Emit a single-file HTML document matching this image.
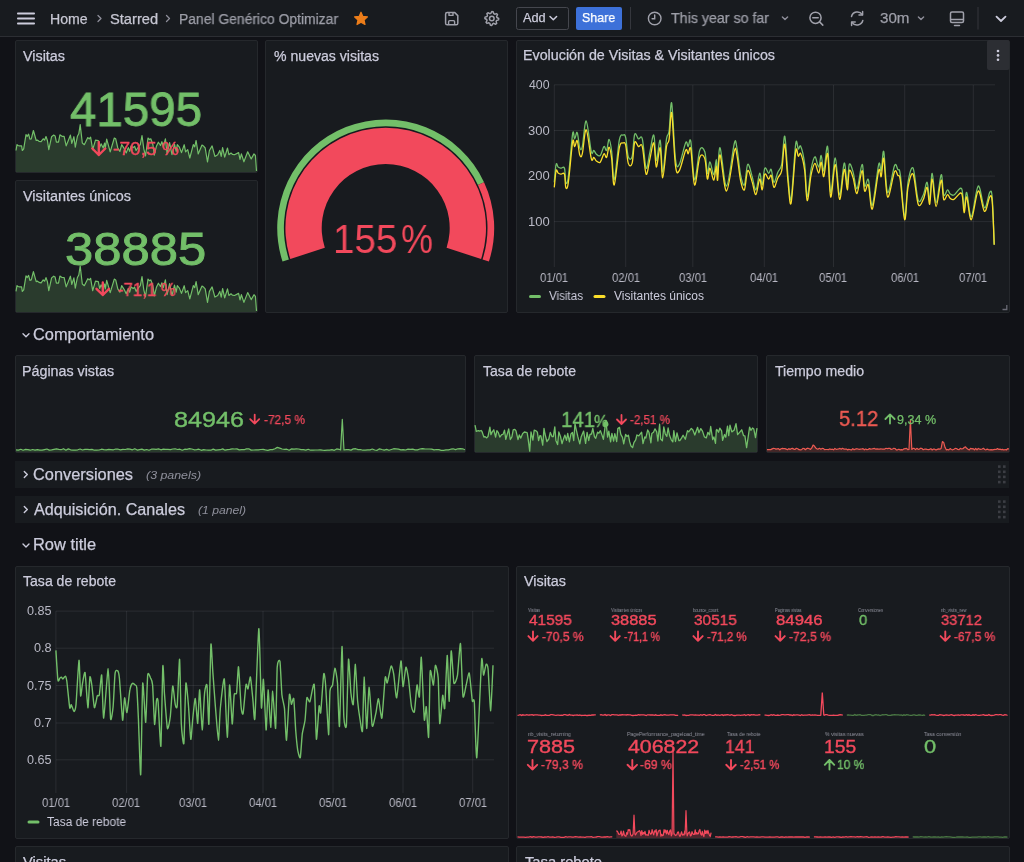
<!DOCTYPE html>
<html><head><meta charset="utf-8"><title>Panel Genérico Optimizar - Grafana</title>
<style>
html,body{margin:0;padding:0}
body{width:1024px;height:862px;overflow:hidden;background:#111217;position:relative;font-family:"Liberation Sans",sans-serif}
.p{position:absolute;box-sizing:border-box;background:#181b1f;border:1px solid #25282c;border-radius:2px}
.t{position:absolute;white-space:nowrap;line-height:1;transform-origin:0 0;will-change:transform}
svg{overflow:visible}
</style></head><body>
<div style="position:absolute;left:0;top:0;width:1024px;height:36px;background:#181b1f;border-bottom:1px solid #2c2e33"></div>
<svg style="position:absolute;left:0;top:0" width="1024" height="36"><rect x="17" y="12.6" width="18" height="1.8" rx="0.9" fill="#ccccdc"/><rect x="17" y="17.6" width="18" height="1.8" rx="0.9" fill="#ccccdc"/><rect x="17" y="22.6" width="18" height="1.8" rx="0.9" fill="#ccccdc"/><path d="M98.0 15.5 L101.0 18.5 L98.0 21.5" stroke="#8e8e9a" stroke-width="1.3" fill="none" stroke-linecap="round" stroke-linejoin="round"/><path d="M166.5 15.5 L169.5 18.5 L166.5 21.5" stroke="#8e8e9a" stroke-width="1.3" fill="none" stroke-linecap="round" stroke-linejoin="round"/><path d="M361.00 12.20 L362.88 16.41 L367.47 16.90 L364.04 19.99 L365.00 24.50 L361.00 22.20 L357.00 24.50 L357.96 19.99 L354.53 16.90 L359.12 16.41Z" fill="#ec7d1a" stroke="#ec7d1a" stroke-width="1.2" stroke-linejoin="round"/><path d="M447.2 12.6 h7.6 l3 3 v7.6 a1.6 1.6 0 0 1 -1.6 1.6 h-9 a1.6 1.6 0 0 1 -1.6 -1.6 v-9 a1.6 1.6 0 0 1 1.6 -1.6z" stroke="#a0a1ab" stroke-width="1.5" fill="none" stroke-linejoin="round"/><path d="M449 12.8 v2.6 h4 v-2.6 M448.6 24.6 v-2.8 a1.2 1.2 0 0 1 1.2 -1.2 h3.6 a1.2 1.2 0 0 1 1.2 1.2 v2.8" stroke="#a0a1ab" stroke-width="1.4" fill="none" stroke-linejoin="round"/><path d="M490.79 13.40 L491.80 11.60 L493.15 11.73 L493.79 13.70 L494.69 14.18 L496.68 13.62 L497.54 14.67 L496.60 16.51 L496.90 17.49 L498.70 18.50 L498.57 19.85 L496.60 20.49 L496.12 21.39 L496.68 23.38 L495.63 24.24 L493.79 23.30 L492.81 23.60 L491.80 25.40 L490.45 25.27 L489.81 23.30 L488.91 22.82 L486.92 23.38 L486.06 22.33 L487.00 20.49 L486.70 19.51 L484.90 18.50 L485.03 17.15 L487.00 16.51 L487.48 15.61 L486.92 13.62 L487.97 12.76 L489.81 13.70Z" stroke="#a0a1ab" stroke-width="1.5" fill="none" stroke-linejoin="round"/><circle cx="491.8" cy="18.5" r="2.3" stroke="#a0a1ab" stroke-width="1.5" fill="none"/><rect x="516.5" y="7.5" width="52" height="22" rx="2" fill="none" stroke="#45474e" stroke-width="1"/><path d="M550 16.5 L553.3 19.8 L556.6 16.5" stroke="#ccccdc" stroke-width="1.5" fill="none" stroke-linecap="round" stroke-linejoin="round"/><rect x="576" y="7" width="46" height="23" rx="2" fill="#3d71d9"/><rect x="630" y="7" width="1" height="22.5" fill="#35373d"/><circle cx="654.7" cy="18.5" r="6.3" stroke="#a0a1ab" stroke-width="1.4" fill="none"/><path d="M654.7 15 v3.8 h-2.6" stroke="#a0a1ab" stroke-width="1.4" fill="none" stroke-linecap="round"/><path d="M782.4 17 L785.0 19.6 L787.6 17" stroke="#8e8e9a" stroke-width="1.4" fill="none" stroke-linecap="round" stroke-linejoin="round"/><path d="M918.4 17 L921.0 19.6 L923.6 17" stroke="#8e8e9a" stroke-width="1.4" fill="none" stroke-linecap="round" stroke-linejoin="round"/><circle cx="815.5" cy="17.8" r="5.6" stroke="#a0a1ab" stroke-width="1.5" fill="none"/><path d="M812.8 17.8 h5.4 M819.6 21.9 l3.2 3.2" stroke="#a0a1ab" stroke-width="1.5" fill="none" stroke-linecap="round"/><path d="M851.5 16.5 a6 6 0 0 1 10.8 -1.8 M862.8 20.5 a6 6 0 0 1 -10.8 1.8" stroke="#a0a1ab" stroke-width="1.5" fill="none" stroke-linecap="round"/><path d="M862.6 11.5 v3.6 h-3.6 M851.6 25.5 v-3.6 h3.6" stroke="#a0a1ab" stroke-width="1.5" fill="none" stroke-linecap="round" stroke-linejoin="round"/><rect x="950.5" y="12" width="13" height="10.5" rx="1.5" stroke="#a0a1ab" stroke-width="1.5" fill="none"/><path d="M951 19.5 h12 M954.5 25.5 h5" stroke="#a0a1ab" stroke-width="1.5" fill="none" stroke-linecap="round"/><rect x="977.5" y="7" width="1" height="22.5" fill="#35373d"/><path d="M996.5 16.6 L1001 21 L1005.5 16.6" stroke="#ccccdc" stroke-width="1.8" fill="none" stroke-linecap="round" stroke-linejoin="round"/></svg>
<div class="p" style="left:15px;top:40px;width:243px;height:133px;"></div>
<div class="p" style="left:15px;top:180px;width:243px;height:133px;"></div>
<div class="p" style="left:265px;top:40px;width:243px;height:273px;"></div>
<div class="p" style="left:516px;top:40px;width:494px;height:273px;"></div>
<svg style="position:absolute;left:0;top:0" width="1024" height="320"><path d="M16.0 150.5 L17.0 144.7 L18.1 145.5 L19.5 145.9 L21.6 145.9 L22.3 150.5 L23.7 148.8 L26.0 134.6 L27.2 136.3 L28.6 134.2 L29.9 139.2 L31.3 138.8 L33.4 130.5 L36.2 140.5 L37.6 140.1 L39.0 141.3 L41.1 141.7 L43.2 138.8 L44.6 140.1 L46.0 136.5 L47.4 140.5 L48.8 149.7 L51.6 136.7 L53.7 135.1 L55.1 135.9 L56.4 142.2 L58.5 142.2 L59.9 134.8 L62.0 136.3 L64.1 136.3 L66.2 145.9 L68.3 140.5 L70.4 135.1 L71.8 143.4 L73.9 136.7 L75.3 147.2 L77.4 136.3 L78.8 133.8 L80.2 124.6 L82.3 143.0 L84.3 144.7 L87.8 137.6 L89.2 138.8 L90.6 137.1 L92.7 149.7 L95.5 140.1 L98.3 140.5 L99.7 147.6 L101.1 143.8 L103.2 148.0 L104.6 143.0 L105.3 148.0 L106.7 139.2 L110.2 151.8 L114.3 138.0 L115.7 138.8 L117.8 148.0 L119.9 151.4 L121.7 144.7 L124.1 148.4 L126.2 153.0 L128.3 147.6 L129.7 151.4 L131.1 145.9 L133.2 147.6 L134.6 146.3 L136.1 150.5 L138.2 147.2 L140.3 144.7 L142.0 135.5 L143.8 148.8 L145.5 156.0 L148.0 138.0 L149.4 139.6 L150.8 138.8 L152.9 144.7 L154.3 155.1 L156.4 146.3 L158.4 142.2 L160.5 145.5 L161.9 141.7 L163.3 146.8 L165.4 138.8 L167.1 153.9 L169.6 142.6 L172.0 154.7 L174.5 144.2 L176.2 151.4 L177.3 144.7 L179.4 147.2 L181.5 152.6 L184.2 144.7 L185.6 151.8 L187.7 149.7 L189.8 158.0 L193.3 144.7 L194.7 146.8 L196.1 140.5 L198.2 153.9 L202.0 145.1 L203.8 146.3 L205.2 148.0 L207.5 161.8 L209.4 150.5 L212.1 145.9 L214.9 156.4 L217.7 154.7 L219.8 150.5 L221.2 156.4 L222.6 147.6 L224.7 157.2 L227.5 148.0 L228.9 154.7 L231.0 153.0 L232.4 154.3 L234.5 154.7 L238.6 152.6 L240.0 159.3 L241.4 153.9 L243.9 161.8 L247.7 151.8 L251.2 158.9 L254.0 153.9 L255.4 155.5 L256.5 171.0 L256.5 172.0 L16.0 172.0 Z" fill="#73bf69" fill-opacity="0.20"/><path d="M16.0 150.5 L17.0 144.7 L18.1 145.5 L19.5 145.9 L21.6 145.9 L22.3 150.5 L23.7 148.8 L26.0 134.6 L27.2 136.3 L28.6 134.2 L29.9 139.2 L31.3 138.8 L33.4 130.5 L36.2 140.5 L37.6 140.1 L39.0 141.3 L41.1 141.7 L43.2 138.8 L44.6 140.1 L46.0 136.5 L47.4 140.5 L48.8 149.7 L51.6 136.7 L53.7 135.1 L55.1 135.9 L56.4 142.2 L58.5 142.2 L59.9 134.8 L62.0 136.3 L64.1 136.3 L66.2 145.9 L68.3 140.5 L70.4 135.1 L71.8 143.4 L73.9 136.7 L75.3 147.2 L77.4 136.3 L78.8 133.8 L80.2 124.6 L82.3 143.0 L84.3 144.7 L87.8 137.6 L89.2 138.8 L90.6 137.1 L92.7 149.7 L95.5 140.1 L98.3 140.5 L99.7 147.6 L101.1 143.8 L103.2 148.0 L104.6 143.0 L105.3 148.0 L106.7 139.2 L110.2 151.8 L114.3 138.0 L115.7 138.8 L117.8 148.0 L119.9 151.4 L121.7 144.7 L124.1 148.4 L126.2 153.0 L128.3 147.6 L129.7 151.4 L131.1 145.9 L133.2 147.6 L134.6 146.3 L136.1 150.5 L138.2 147.2 L140.3 144.7 L142.0 135.5 L143.8 148.8 L145.5 156.0 L148.0 138.0 L149.4 139.6 L150.8 138.8 L152.9 144.7 L154.3 155.1 L156.4 146.3 L158.4 142.2 L160.5 145.5 L161.9 141.7 L163.3 146.8 L165.4 138.8 L167.1 153.9 L169.6 142.6 L172.0 154.7 L174.5 144.2 L176.2 151.4 L177.3 144.7 L179.4 147.2 L181.5 152.6 L184.2 144.7 L185.6 151.8 L187.7 149.7 L189.8 158.0 L193.3 144.7 L194.7 146.8 L196.1 140.5 L198.2 153.9 L202.0 145.1 L203.8 146.3 L205.2 148.0 L207.5 161.8 L209.4 150.5 L212.1 145.9 L214.9 156.4 L217.7 154.7 L219.8 150.5 L221.2 156.4 L222.6 147.6 L224.7 157.2 L227.5 148.0 L228.9 154.7 L231.0 153.0 L232.4 154.3 L234.5 154.7 L238.6 152.6 L240.0 159.3 L241.4 153.9 L243.9 161.8 L247.7 151.8 L251.2 158.9 L254.0 153.9 L255.4 155.5 L256.5 171.0" stroke="#73bf69" stroke-width="1.2" fill="none" stroke-linejoin="round"/><path d="M16.0 291.4 L17.0 285.7 L18.1 286.5 L19.5 286.9 L21.6 286.9 L22.3 291.4 L23.7 289.8 L26.0 275.8 L27.2 277.5 L28.6 275.4 L29.9 280.3 L31.3 279.9 L33.4 271.7 L36.2 281.6 L37.6 281.2 L39.0 282.4 L41.1 282.8 L43.2 279.9 L44.6 281.2 L46.0 277.6 L47.4 281.6 L48.8 290.6 L51.6 277.9 L53.7 276.2 L55.1 277.1 L56.4 283.2 L58.5 283.2 L59.9 276.0 L62.0 277.5 L64.1 277.5 L66.2 286.9 L68.3 281.6 L70.4 276.2 L71.8 284.4 L73.9 277.9 L75.3 288.1 L77.4 277.5 L78.8 275.0 L80.2 266.0 L82.3 284.0 L84.3 285.7 L87.8 278.7 L89.2 279.9 L90.6 278.3 L92.7 290.6 L95.5 281.2 L98.3 281.6 L99.7 288.5 L101.1 284.8 L103.2 288.9 L104.6 284.0 L105.3 288.9 L106.7 280.3 L110.2 292.6 L114.3 279.1 L115.7 279.9 L117.8 288.9 L119.9 292.2 L121.7 285.7 L124.1 289.3 L126.2 293.8 L128.3 288.5 L129.7 292.2 L131.1 286.9 L133.2 288.5 L134.6 287.3 L136.1 291.4 L138.2 288.1 L140.3 285.7 L142.0 276.6 L143.8 289.8 L145.5 296.7 L148.0 279.1 L149.4 280.7 L150.8 279.9 L152.9 285.7 L154.3 295.9 L156.4 287.3 L158.4 283.2 L160.5 286.5 L161.9 282.8 L163.3 287.7 L165.4 279.9 L167.1 294.7 L169.6 283.6 L172.0 295.5 L174.5 285.2 L176.2 292.2 L177.3 285.7 L179.4 288.1 L181.5 293.4 L184.2 285.7 L185.6 292.6 L187.7 290.6 L189.8 298.8 L193.3 285.7 L194.7 287.7 L196.1 281.6 L198.2 294.7 L202.0 286.1 L203.8 287.3 L205.2 288.9 L207.5 302.4 L209.4 291.4 L212.1 286.9 L214.9 297.1 L217.7 295.5 L219.8 291.4 L221.2 297.1 L222.6 288.5 L224.7 297.9 L227.5 288.9 L228.9 295.5 L231.0 293.8 L232.4 295.1 L234.5 295.5 L238.6 293.4 L240.0 300.0 L241.4 294.7 L243.9 302.4 L247.7 292.6 L251.2 299.6 L254.0 294.7 L255.4 296.3 L256.5 311.0 L256.5 312.0 L16.0 312.0 Z" fill="#73bf69" fill-opacity="0.20"/><path d="M16.0 291.4 L17.0 285.7 L18.1 286.5 L19.5 286.9 L21.6 286.9 L22.3 291.4 L23.7 289.8 L26.0 275.8 L27.2 277.5 L28.6 275.4 L29.9 280.3 L31.3 279.9 L33.4 271.7 L36.2 281.6 L37.6 281.2 L39.0 282.4 L41.1 282.8 L43.2 279.9 L44.6 281.2 L46.0 277.6 L47.4 281.6 L48.8 290.6 L51.6 277.9 L53.7 276.2 L55.1 277.1 L56.4 283.2 L58.5 283.2 L59.9 276.0 L62.0 277.5 L64.1 277.5 L66.2 286.9 L68.3 281.6 L70.4 276.2 L71.8 284.4 L73.9 277.9 L75.3 288.1 L77.4 277.5 L78.8 275.0 L80.2 266.0 L82.3 284.0 L84.3 285.7 L87.8 278.7 L89.2 279.9 L90.6 278.3 L92.7 290.6 L95.5 281.2 L98.3 281.6 L99.7 288.5 L101.1 284.8 L103.2 288.9 L104.6 284.0 L105.3 288.9 L106.7 280.3 L110.2 292.6 L114.3 279.1 L115.7 279.9 L117.8 288.9 L119.9 292.2 L121.7 285.7 L124.1 289.3 L126.2 293.8 L128.3 288.5 L129.7 292.2 L131.1 286.9 L133.2 288.5 L134.6 287.3 L136.1 291.4 L138.2 288.1 L140.3 285.7 L142.0 276.6 L143.8 289.8 L145.5 296.7 L148.0 279.1 L149.4 280.7 L150.8 279.9 L152.9 285.7 L154.3 295.9 L156.4 287.3 L158.4 283.2 L160.5 286.5 L161.9 282.8 L163.3 287.7 L165.4 279.9 L167.1 294.7 L169.6 283.6 L172.0 295.5 L174.5 285.2 L176.2 292.2 L177.3 285.7 L179.4 288.1 L181.5 293.4 L184.2 285.7 L185.6 292.6 L187.7 290.6 L189.8 298.8 L193.3 285.7 L194.7 287.7 L196.1 281.6 L198.2 294.7 L202.0 286.1 L203.8 287.3 L205.2 288.9 L207.5 302.4 L209.4 291.4 L212.1 286.9 L214.9 297.1 L217.7 295.5 L219.8 291.4 L221.2 297.1 L222.6 288.5 L224.7 297.9 L227.5 288.9 L228.9 295.5 L231.0 293.8 L232.4 295.1 L234.5 295.5 L238.6 293.4 L240.0 300.0 L241.4 294.7 L243.9 302.4 L247.7 292.6 L251.2 299.6 L254.0 294.7 L255.4 296.3 L256.5 311.0" stroke="#73bf69" stroke-width="1.2" fill="none" stroke-linejoin="round"/></svg>
<svg style="position:absolute;left:0;top:0" width="1024" height="320"><path d="M282.51 261.53 A108.50 108.50 0 0 1 484.03 182.15 L477.96 184.98 A101.80 101.80 0 0 0 288.88 259.46 Z" fill="#73bf69"/><path d="M484.03 182.15 A108.50 108.50 0 0 1 488.89 261.53 L482.52 259.46 A101.80 101.80 0 0 0 477.96 184.98 Z" fill="#f2495c"/><path d="M290.31 258.99 A100.30 100.30 0 1 1 481.09 258.99 L446.57 247.78 A64.00 64.00 0 1 0 324.83 247.78 Z" fill="#f2495c"/><path d="M98.8 142.0 V155.0 M92.3 148.5 L98.8 155.0 L105.3 148.5" stroke="#f2495c" stroke-width="2.4" fill="none" stroke-linecap="round" stroke-linejoin="round"/><path d="M102.8 282.5 V295.0 M96.5 288.8 L102.8 295.0 L109.0 288.8" stroke="#f2495c" stroke-width="2.4" fill="none" stroke-linecap="round" stroke-linejoin="round"/></svg>
<svg style="position:absolute;left:0;top:0" width="1024" height="320"><rect x="554" y="84.3" width="441" height="1" fill="rgba(204,204,220,0.1)"/><rect x="554" y="130.0" width="441" height="1" fill="rgba(204,204,220,0.1)"/><rect x="554" y="175.6" width="441" height="1" fill="rgba(204,204,220,0.1)"/><rect x="554" y="221.1" width="441" height="1" fill="rgba(204,204,220,0.1)"/><rect x="553.8" y="85" width="1" height="182" fill="rgba(204,204,220,0.1)"/><rect x="625.2" y="85" width="1" height="182" fill="rgba(204,204,220,0.1)"/><rect x="692.3" y="85" width="1" height="182" fill="rgba(204,204,220,0.1)"/><rect x="763.8" y="85" width="1" height="182" fill="rgba(204,204,220,0.1)"/><rect x="833.0" y="85" width="1" height="182" fill="rgba(204,204,220,0.1)"/><rect x="904.2" y="85" width="1" height="182" fill="rgba(204,204,220,0.1)"/><rect x="972.8" y="85" width="1" height="182" fill="rgba(204,204,220,0.1)"/><path d="M554.3 182.3 C554.6 179.3 555.4 167.0 556.1 164.4 C556.7 161.9 557.3 166.3 558.1 167.0 C558.9 167.6 559.6 168.0 560.7 168.2 C561.7 168.5 563.6 165.9 564.5 168.2 C565.3 170.6 565.1 180.8 565.8 182.3 C566.4 183.8 567.2 185.3 568.3 177.2 C569.5 169.1 571.6 140.2 572.6 133.8 C573.7 127.4 573.9 139.1 574.7 138.9 C575.5 138.7 576.4 131.0 577.2 132.5 C578.1 134.0 578.9 145.5 579.8 147.8 C580.6 150.2 581.3 151.0 582.3 146.6 C583.4 142.1 584.7 120.2 586.2 121.0 C587.7 121.9 590.0 146.8 591.3 151.7 C592.6 156.5 593.0 150.0 593.8 150.4 C594.7 150.8 595.3 153.4 596.4 154.2 C597.4 155.1 598.9 156.8 600.2 155.5 C601.5 154.2 603.0 147.4 604.0 146.6 C605.1 145.7 605.7 151.6 606.6 150.4 C607.4 149.2 608.3 139.2 609.1 139.4 C610.0 139.6 610.8 144.9 611.7 151.7 C612.5 158.4 613.0 181.6 614.2 179.7 C615.5 177.8 617.9 147.6 619.3 140.2 C620.8 132.7 622.1 135.5 623.2 135.1 C624.2 134.6 624.9 134.0 625.7 137.6 C626.6 141.2 627.2 153.6 628.3 156.8 C629.3 159.9 631.0 160.5 632.1 156.8 C633.2 153.0 633.6 137.3 634.7 134.3 C635.7 131.3 637.2 138.1 638.5 138.9 C639.8 139.7 641.0 134.0 642.3 138.9 C643.6 143.8 644.9 166.1 646.1 168.2 C647.4 170.4 648.7 157.2 650.0 151.7 C651.2 146.1 652.7 133.6 653.8 135.1 C654.9 136.6 655.3 159.7 656.3 160.6 C657.4 161.4 659.1 138.3 660.2 140.2 C661.2 142.1 661.7 172.3 662.7 172.1 C663.8 171.9 665.5 145.7 666.5 138.9 C667.6 132.1 668.2 137.2 669.1 131.2 C670.0 125.3 670.6 98.5 671.7 103.2 C672.7 107.8 674.2 149.1 675.5 159.3 C676.8 169.5 677.6 167.2 679.3 164.4 C681.0 161.6 684.2 145.7 685.7 142.7 C687.2 139.7 687.4 146.8 688.2 146.6 C689.1 146.3 689.7 135.9 690.8 141.4 C691.9 147.0 693.1 178.2 694.6 179.7 C696.1 181.2 698.0 155.1 699.7 150.4 C701.4 145.7 703.5 147.8 704.8 151.7 C706.1 155.5 706.5 171.6 707.4 173.3 C708.2 175.0 708.9 161.6 709.9 161.9 C711.0 162.1 712.7 175.0 713.8 174.6 C714.8 174.2 715.7 159.3 716.3 159.3 C716.9 159.3 716.9 176.5 717.6 174.6 C718.2 172.7 718.6 145.9 720.1 147.8 C721.6 149.7 724.2 186.7 726.5 186.1 C728.9 185.5 732.5 150.6 734.2 144.0 C735.9 137.4 735.7 141.4 736.7 146.6 C737.8 151.7 739.3 168.2 740.5 174.6 C741.8 181.0 743.2 186.5 744.4 184.8 C745.6 183.1 746.4 165.9 747.7 164.4 C749.0 162.9 750.7 171.6 752.0 175.9 C753.4 180.1 754.6 190.4 755.9 189.9 C757.1 189.5 758.6 174.2 759.7 173.3 C760.7 172.5 761.4 185.7 762.2 184.8 C763.1 184.0 763.7 170.2 764.8 168.2 C765.9 166.3 767.6 173.1 768.6 173.3 C769.7 173.6 770.3 168.0 771.2 169.5 C772.1 171.0 772.9 181.8 774.0 182.3 C775.1 182.7 776.6 175.0 777.9 172.1 C779.1 169.1 780.5 170.4 781.7 164.4 C782.8 158.5 783.7 134.2 784.8 136.3 C785.8 138.5 787.0 166.8 788.1 177.2 C789.1 187.6 789.9 204.4 791.1 198.9 C792.4 193.3 794.5 152.3 795.7 144.0 C796.9 135.7 797.4 148.7 798.3 149.1 C799.1 149.5 799.8 144.0 800.8 146.6 C801.9 149.1 803.6 156.1 804.7 164.4 C805.7 172.7 806.1 195.5 807.2 196.3 C808.3 197.2 809.8 176.1 811.0 169.5 C812.3 162.9 813.6 157.2 814.9 156.8 C816.1 156.3 817.6 167.2 818.7 167.0 C819.8 166.8 820.4 154.8 821.2 155.5 C822.1 156.1 822.7 172.3 823.8 170.8 C824.9 169.3 826.5 142.9 827.6 146.6 C828.8 150.2 829.4 190.6 830.7 192.5 C832.0 194.4 833.8 157.6 835.3 158.0 C836.8 158.5 838.1 194.2 839.6 195.0 C841.1 195.9 842.9 164.8 844.2 163.1 C845.5 161.4 846.4 184.6 847.3 184.8 C848.1 185.0 848.3 166.5 849.3 164.4 C850.3 162.3 851.9 168.0 853.1 172.1 C854.4 176.1 855.5 189.9 857.0 188.7 C858.5 187.4 860.8 164.8 862.1 164.4 C863.3 164.0 863.6 183.5 864.6 186.1 C865.7 188.7 867.2 176.5 868.4 179.7 C869.7 182.9 870.6 207.8 872.3 205.2 C874.0 202.7 877.2 170.2 878.7 164.4 C880.1 158.7 880.4 172.9 881.2 170.8 C882.1 168.7 882.7 148.0 883.8 151.7 C884.8 155.3 885.8 190.1 887.6 192.5 C889.4 194.8 892.8 169.5 894.5 165.7 C896.2 161.9 896.8 168.0 897.8 169.5 C898.8 171.0 899.2 166.8 900.3 174.6 C901.5 182.5 903.4 215.4 904.7 216.7 C906.0 218.0 906.6 190.4 908.0 182.3 C909.4 174.2 911.4 165.3 913.1 168.2 C914.8 171.2 916.5 195.7 918.2 200.1 C919.9 204.6 921.8 198.0 923.3 195.0 C924.8 192.1 926.1 181.4 927.1 182.3 C928.2 183.1 928.8 201.6 929.7 200.1 C930.5 198.6 931.2 172.9 932.2 173.3 C933.3 173.8 934.6 202.5 936.1 202.7 C937.6 202.9 939.9 175.9 941.2 174.6 C942.4 173.3 942.7 192.5 943.7 195.0 C944.8 197.6 946.5 190.1 947.5 189.9 C948.6 189.7 949.0 192.9 950.1 193.8 C951.2 194.6 952.0 195.9 953.9 195.0 C955.8 194.2 959.9 186.3 961.6 188.7 C963.3 191.0 963.3 208.4 964.1 209.1 C965.0 209.7 965.5 191.2 966.7 192.5 C967.9 193.8 969.4 217.8 971.3 216.7 C973.2 215.7 976.0 187.6 978.2 186.1 C980.4 184.6 982.6 206.7 984.5 207.8 C986.5 208.9 988.4 194.2 989.7 192.5 C990.9 190.8 991.4 188.9 992.2 197.6 C993.0 206.3 993.9 236.9 994.2 244.8" stroke="#73bf69" stroke-width="1.3" fill="none" stroke-linejoin="round"/><path d="M554.3 187.4 C554.6 184.6 555.4 173.0 556.1 170.6 C556.7 168.2 557.3 172.4 558.1 173.0 C558.9 173.6 559.6 174.0 560.7 174.2 C561.7 174.4 563.6 172.0 564.5 174.2 C565.3 176.4 565.1 186.0 565.8 187.4 C566.4 188.8 567.2 190.2 568.3 182.6 C569.5 175.0 571.6 147.8 572.6 141.8 C573.7 135.8 573.9 146.8 574.7 146.6 C575.5 146.4 576.4 139.2 577.2 140.6 C578.1 142.0 578.9 152.8 579.8 155.0 C580.6 157.2 581.3 158.0 582.3 153.8 C583.4 149.6 584.7 129.0 586.2 129.8 C587.7 130.6 590.0 154.0 591.3 158.6 C592.6 163.2 593.0 157.0 593.8 157.4 C594.7 157.8 595.3 160.2 596.4 161.0 C597.4 161.8 598.9 163.4 600.2 162.2 C601.5 161.0 603.0 154.6 604.0 153.8 C605.1 153.0 605.7 158.5 606.6 157.4 C607.4 156.3 608.3 146.9 609.1 147.1 C610.0 147.3 610.8 152.3 611.7 158.6 C612.5 164.9 613.0 186.8 614.2 185.0 C615.5 183.2 617.9 154.8 619.3 147.8 C620.8 140.8 622.1 143.4 623.2 143.0 C624.2 142.6 624.9 142.0 625.7 145.4 C626.6 148.8 627.2 160.4 628.3 163.4 C629.3 166.4 631.0 166.9 632.1 163.4 C633.2 159.9 633.6 145.1 634.7 142.3 C635.7 139.5 637.2 145.9 638.5 146.6 C639.8 147.3 641.0 142.0 642.3 146.6 C643.6 151.2 644.9 172.2 646.1 174.2 C647.4 176.2 648.7 163.8 650.0 158.6 C651.2 153.4 652.7 141.6 653.8 143.0 C654.9 144.4 655.3 166.2 656.3 167.0 C657.4 167.8 659.1 146.0 660.2 147.8 C661.2 149.6 661.7 178.0 662.7 177.8 C663.8 177.6 665.5 153.0 666.5 146.6 C667.6 140.2 668.2 145.0 669.1 139.4 C670.0 133.8 670.6 108.6 671.7 113.0 C672.7 117.4 674.2 156.2 675.5 165.8 C676.8 175.4 677.6 173.2 679.3 170.6 C681.0 168.0 684.2 153.0 685.7 150.2 C687.2 147.4 687.4 154.0 688.2 153.8 C689.1 153.6 689.7 143.8 690.8 149.0 C691.9 154.2 693.1 183.6 694.6 185.0 C696.1 186.4 698.0 161.8 699.7 157.4 C701.4 153.0 703.5 155.0 704.8 158.6 C706.1 162.2 706.5 177.4 707.4 179.0 C708.2 180.6 708.9 168.0 709.9 168.2 C711.0 168.4 712.7 180.6 713.8 180.2 C714.8 179.8 715.7 165.8 716.3 165.8 C716.9 165.8 716.9 182.0 717.6 180.2 C718.2 178.4 718.6 153.2 720.1 155.0 C721.6 156.8 724.2 191.6 726.5 191.0 C728.9 190.4 732.5 157.6 734.2 151.4 C735.9 145.2 735.7 149.0 736.7 153.8 C737.8 158.6 739.3 174.2 740.5 180.2 C741.8 186.2 743.2 191.4 744.4 189.8 C745.6 188.2 746.4 172.0 747.7 170.6 C749.0 169.2 750.7 177.4 752.0 181.4 C753.4 185.4 754.6 195.0 755.9 194.6 C757.1 194.2 758.6 179.8 759.7 179.0 C760.7 178.2 761.4 190.6 762.2 189.8 C763.1 189.0 763.7 176.0 764.8 174.2 C765.9 172.4 767.6 178.8 768.6 179.0 C769.7 179.2 770.3 174.0 771.2 175.4 C772.1 176.8 772.9 187.0 774.0 187.4 C775.1 187.8 776.6 180.6 777.9 177.8 C779.1 175.0 780.5 176.2 781.7 170.6 C782.8 165.0 783.7 142.2 784.8 144.2 C785.8 146.2 787.0 172.8 788.1 182.6 C789.1 192.4 789.9 208.2 791.1 203.0 C792.4 197.8 794.5 159.2 795.7 151.4 C796.9 143.6 797.4 155.8 798.3 156.2 C799.1 156.6 799.8 151.4 800.8 153.8 C801.9 156.2 803.6 162.8 804.7 170.6 C805.7 178.4 806.1 199.8 807.2 200.6 C808.3 201.4 809.8 181.6 811.0 175.4 C812.3 169.2 813.6 163.8 814.9 163.4 C816.1 163.0 817.6 173.2 818.7 173.0 C819.8 172.8 820.4 161.6 821.2 162.2 C822.1 162.8 822.7 178.0 823.8 176.6 C824.9 175.2 826.5 150.4 827.6 153.8 C828.8 157.2 829.4 195.2 830.7 197.0 C832.0 198.8 833.8 164.2 835.3 164.6 C836.8 165.0 838.1 198.6 839.6 199.4 C841.1 200.2 842.9 171.0 844.2 169.4 C845.5 167.8 846.4 189.6 847.3 189.8 C848.1 190.0 848.3 172.6 849.3 170.6 C850.3 168.6 851.9 174.0 853.1 177.8 C854.4 181.6 855.5 194.6 857.0 193.4 C858.5 192.2 860.8 171.0 862.1 170.6 C863.3 170.2 863.6 188.6 864.6 191.0 C865.7 193.4 867.2 182.0 868.4 185.0 C869.7 188.0 870.6 211.4 872.3 209.0 C874.0 206.6 877.2 176.0 878.7 170.6 C880.1 165.2 880.4 178.6 881.2 176.6 C882.1 174.6 882.7 155.2 883.8 158.6 C884.8 162.0 885.8 194.8 887.6 197.0 C889.4 199.2 892.8 175.4 894.5 171.8 C896.2 168.2 896.8 174.0 897.8 175.4 C898.8 176.8 899.2 172.8 900.3 180.2 C901.5 187.6 903.4 218.6 904.7 219.7 C906.0 220.9 906.6 195.0 908.0 187.4 C909.4 179.8 911.4 171.4 913.1 174.2 C914.8 177.0 916.5 200.0 918.2 204.2 C919.9 208.4 921.8 202.2 923.3 199.4 C924.8 196.6 926.1 186.6 927.1 187.4 C928.2 188.2 928.8 205.6 929.7 204.2 C930.5 202.8 931.2 178.6 932.2 179.0 C933.3 179.4 934.6 206.4 936.1 206.6 C937.6 206.8 939.9 181.4 941.2 180.2 C942.4 179.0 942.7 197.0 943.7 199.4 C944.8 201.8 946.5 194.8 947.5 194.6 C948.6 194.4 949.0 197.4 950.1 198.2 C951.2 199.0 952.0 200.2 953.9 199.4 C955.8 198.6 959.9 191.2 961.6 193.4 C963.3 195.6 963.3 212.0 964.1 212.6 C965.0 213.2 965.5 195.8 966.7 197.0 C967.9 198.2 969.4 220.7 971.3 219.7 C973.2 218.8 976.0 192.4 978.2 191.0 C980.4 189.6 982.6 210.4 984.5 211.4 C986.5 212.4 988.4 198.6 989.7 197.0 C990.9 195.4 991.4 193.8 992.2 201.8 C993.0 209.7 993.9 237.6 994.2 244.8" stroke="#fade2a" stroke-width="1.3" fill="none" stroke-linejoin="round"/><rect x="529" y="295" width="12" height="3" rx="1.5" fill="#73bf69"/><rect x="593.5" y="295" width="12" height="3" rx="1.5" fill="#fade2a"/><rect x="987" y="40" width="22.5" height="30" rx="2" fill="#2c2e33"/><circle cx="998" cy="51.0" r="1.3" fill="#ccccdc"/><circle cx="998" cy="55.4" r="1.3" fill="#ccccdc"/><circle cx="998" cy="59.7" r="1.3" fill="#ccccdc"/><path d="M1006.8 305 L1006.8 309.5 L1002.5 309.5" stroke="rgba(204,204,220,0.45)" stroke-width="1.3" fill="none"/></svg>
<svg style="position:absolute;left:0;top:0" width="1024" height="862"><path d="M23 333.8 L26 336.8 L29 333.8" stroke="#ccccdc" stroke-width="1.4" fill="none" stroke-linecap="round" stroke-linejoin="round"/></svg>
<div class="p" style="left:15px;top:355px;width:451px;height:98px;"></div>
<div class="p" style="left:474px;top:355px;width:284px;height:98px;"></div>
<div class="p" style="left:766px;top:355px;width:244px;height:98px;"></div>
<svg style="position:absolute;left:0;top:0" width="1024" height="862"><path d="M16.0 449.8 L18.4 450.1 L20.8 449.3 L23.1 450.2 L25.5 449.4 L27.9 449.7 L30.3 450.2 L32.6 449.5 L35.0 450.2 L37.4 449.6 L39.8 450.2 L42.1 450.2 L44.5 449.6 L46.9 449.0 L49.3 450.1 L51.6 449.9 L54.0 449.3 L56.4 448.8 L58.8 449.4 L61.1 449.7 L63.5 448.7 L65.9 450.2 L68.3 448.9 L70.6 449.8 L73.0 450.1 L75.4 450.1 L77.8 449.8 L80.1 449.0 L82.5 450.0 L84.9 449.4 L87.3 449.3 L89.6 449.7 L92.0 449.4 L94.4 450.2 L96.8 450.2 L99.1 450.0 L101.5 449.2 L103.9 449.6 L106.3 449.8 L108.7 449.4 L111.0 449.6 L113.4 449.8 L115.8 449.0 L118.2 449.2 L120.5 449.9 L122.9 449.4 L125.3 449.5 L127.7 448.9 L130.0 449.1 L132.4 449.8 L134.8 448.7 L137.2 450.1 L139.5 449.6 L141.9 449.1 L144.3 450.1 L146.7 449.5 L149.0 450.2 L151.4 449.2 L153.8 449.1 L156.2 449.4 L158.5 448.9 L160.9 449.8 L163.3 449.2 L165.7 449.3 L168.0 449.4 L170.4 449.6 L172.8 449.0 L175.2 448.8 L177.5 449.5 L179.9 449.2 L182.3 450.2 L184.7 449.2 L187.0 449.3 L189.4 448.7 L191.8 449.0 L194.2 449.8 L196.6 449.7 L198.9 449.2 L201.3 450.3 L203.7 449.6 L206.1 450.0 L208.4 450.1 L210.8 450.2 L213.2 449.1 L215.6 450.1 L217.9 449.9 L220.3 449.7 L222.7 448.9 L225.1 450.2 L227.4 449.6 L229.8 449.4 L232.2 448.9 L234.6 449.0 L236.9 448.9 L239.3 449.9 L241.7 449.6 L244.1 449.7 L246.4 448.9 L248.8 448.8 L251.2 450.1 L253.6 450.0 L255.9 449.9 L258.3 449.9 L260.7 449.5 L263.1 449.4 L265.4 449.9 L267.8 450.3 L270.2 449.6 L272.6 449.6 L274.9 448.7 L277.3 447.4 L279.7 448.1 L282.1 449.0 L284.4 449.3 L286.8 449.2 L289.2 450.2 L291.6 448.9 L294.0 449.1 L296.3 448.9 L298.7 449.0 L301.1 449.7 L303.5 449.7 L305.8 450.1 L308.2 449.3 L310.6 450.2 L313.0 450.2 L315.3 450.0 L317.7 450.0 L320.1 449.8 L322.5 450.2 L324.8 450.3 L327.2 450.1 L329.6 450.1 L332.0 449.7 L334.3 450.3 L336.7 448.9 L339.1 449.3 L340.6 450.0 L342.3 419.3 L344.0 450.0 L346.2 449.7 L348.6 449.7 L351.0 450.1 L353.3 448.9 L355.7 448.7 L358.1 449.6 L360.5 449.5 L362.8 450.2 L365.2 450.1 L367.6 449.8 L370.0 449.9 L372.3 449.0 L374.7 450.0 L377.1 450.3 L379.5 448.8 L381.9 449.5 L384.2 450.1 L386.6 449.4 L389.0 450.3 L391.4 449.5 L393.7 448.7 L396.1 448.9 L398.5 449.2 L400.9 449.9 L403.2 449.7 L405.6 450.0 L408.0 449.1 L410.4 449.4 L412.7 449.1 L415.1 449.8 L417.5 449.9 L419.9 449.0 L422.2 448.7 L424.6 448.9 L427.0 449.0 L429.4 449.0 L431.7 449.1 L434.1 449.9 L436.5 449.5 L438.9 449.7 L441.2 450.3 L443.6 450.3 L446.0 449.9 L448.4 449.9 L450.7 449.2 L453.1 448.8 L455.5 449.6 L457.9 448.8 L460.2 448.7 L462.6 448.8 L465.0 449.7 L465.0 452.0 L16.0 452.0 Z" fill="#73bf69" fill-opacity="0.20"/><path d="M16.0 449.8 L18.4 450.1 L20.8 449.3 L23.1 450.2 L25.5 449.4 L27.9 449.7 L30.3 450.2 L32.6 449.5 L35.0 450.2 L37.4 449.6 L39.8 450.2 L42.1 450.2 L44.5 449.6 L46.9 449.0 L49.3 450.1 L51.6 449.9 L54.0 449.3 L56.4 448.8 L58.8 449.4 L61.1 449.7 L63.5 448.7 L65.9 450.2 L68.3 448.9 L70.6 449.8 L73.0 450.1 L75.4 450.1 L77.8 449.8 L80.1 449.0 L82.5 450.0 L84.9 449.4 L87.3 449.3 L89.6 449.7 L92.0 449.4 L94.4 450.2 L96.8 450.2 L99.1 450.0 L101.5 449.2 L103.9 449.6 L106.3 449.8 L108.7 449.4 L111.0 449.6 L113.4 449.8 L115.8 449.0 L118.2 449.2 L120.5 449.9 L122.9 449.4 L125.3 449.5 L127.7 448.9 L130.0 449.1 L132.4 449.8 L134.8 448.7 L137.2 450.1 L139.5 449.6 L141.9 449.1 L144.3 450.1 L146.7 449.5 L149.0 450.2 L151.4 449.2 L153.8 449.1 L156.2 449.4 L158.5 448.9 L160.9 449.8 L163.3 449.2 L165.7 449.3 L168.0 449.4 L170.4 449.6 L172.8 449.0 L175.2 448.8 L177.5 449.5 L179.9 449.2 L182.3 450.2 L184.7 449.2 L187.0 449.3 L189.4 448.7 L191.8 449.0 L194.2 449.8 L196.6 449.7 L198.9 449.2 L201.3 450.3 L203.7 449.6 L206.1 450.0 L208.4 450.1 L210.8 450.2 L213.2 449.1 L215.6 450.1 L217.9 449.9 L220.3 449.7 L222.7 448.9 L225.1 450.2 L227.4 449.6 L229.8 449.4 L232.2 448.9 L234.6 449.0 L236.9 448.9 L239.3 449.9 L241.7 449.6 L244.1 449.7 L246.4 448.9 L248.8 448.8 L251.2 450.1 L253.6 450.0 L255.9 449.9 L258.3 449.9 L260.7 449.5 L263.1 449.4 L265.4 449.9 L267.8 450.3 L270.2 449.6 L272.6 449.6 L274.9 448.7 L277.3 447.4 L279.7 448.1 L282.1 449.0 L284.4 449.3 L286.8 449.2 L289.2 450.2 L291.6 448.9 L294.0 449.1 L296.3 448.9 L298.7 449.0 L301.1 449.7 L303.5 449.7 L305.8 450.1 L308.2 449.3 L310.6 450.2 L313.0 450.2 L315.3 450.0 L317.7 450.0 L320.1 449.8 L322.5 450.2 L324.8 450.3 L327.2 450.1 L329.6 450.1 L332.0 449.7 L334.3 450.3 L336.7 448.9 L339.1 449.3 L340.6 450.0 L342.3 419.3 L344.0 450.0 L346.2 449.7 L348.6 449.7 L351.0 450.1 L353.3 448.9 L355.7 448.7 L358.1 449.6 L360.5 449.5 L362.8 450.2 L365.2 450.1 L367.6 449.8 L370.0 449.9 L372.3 449.0 L374.7 450.0 L377.1 450.3 L379.5 448.8 L381.9 449.5 L384.2 450.1 L386.6 449.4 L389.0 450.3 L391.4 449.5 L393.7 448.7 L396.1 448.9 L398.5 449.2 L400.9 449.9 L403.2 449.7 L405.6 450.0 L408.0 449.1 L410.4 449.4 L412.7 449.1 L415.1 449.8 L417.5 449.9 L419.9 449.0 L422.2 448.7 L424.6 448.9 L427.0 449.0 L429.4 449.0 L431.7 449.1 L434.1 449.9 L436.5 449.5 L438.9 449.7 L441.2 450.3 L443.6 450.3 L446.0 449.9 L448.4 449.9 L450.7 449.2 L453.1 448.8 L455.5 449.6 L457.9 448.8 L460.2 448.7 L462.6 448.8 L465.0 449.7" stroke="#73bf69" stroke-width="1.2" fill="none" stroke-linejoin="round"/><path d="M475.0 425.1 L476.3 431.3 L477.5 430.9 L478.6 430.7 L479.5 431.1 L481.1 430.5 L482.0 431.5 L483.9 437.1 L484.9 436.5 L486.7 437.9 L488.0 436.5 L489.9 427.1 L490.9 434.6 L492.2 431.9 L493.8 429.8 L495.6 437.1 L496.9 430.7 L498.2 432.3 L499.8 437.1 L501.7 434.6 L503.0 434.4 L504.5 430.2 L505.8 439.3 L508.7 428.9 L510.3 439.5 L511.9 436.9 L513.2 429.8 L514.8 429.3 L516.0 430.9 L518.0 439.7 L519.3 435.0 L520.8 438.1 L522.7 433.4 L524.4 432.0 L526.2 432.3 L527.2 432.9 L528.2 439.4 L529.7 451.2 L531.0 432.0 L532.9 440.2 L534.2 430.2 L536.1 430.9 L537.4 432.3 L538.6 440.6 L539.9 435.6 L540.9 435.9 L542.7 445.2 L544.0 428.4 L545.0 434.0 L546.9 441.5 L548.8 439.0 L550.3 432.5 L552.0 436.5 L553.3 436.7 L554.8 426.9 L555.9 440.4 L557.6 444.6 L558.8 432.0 L560.5 436.5 L562.0 443.7 L563.3 439.4 L564.9 435.1 L566.5 440.4 L567.7 433.4 L569.4 441.8 L570.9 434.0 L572.4 432.4 L573.7 440.5 L575.0 423.8 L576.3 429.8 L577.9 436.9 L579.8 443.9 L581.1 437.1 L583.6 431.1 L585.6 443.3 L587.1 432.3 L588.7 440.5 L590.0 434.4 L591.5 434.0 L592.8 428.5 L594.5 436.9 L595.7 438.3 L597.6 432.2 L598.9 433.2 L600.4 430.7 L602.1 435.4 L603.4 439.3 L605.9 420.5 L607.6 437.1 L608.8 431.2 L610.6 441.8 L611.9 433.4 L613.6 441.2 L614.8 433.7 L616.7 441.5 L617.8 428.6 L619.5 427.4 L620.8 434.4 L622.5 437.3 L623.7 443.9 L625.6 434.4 L626.9 436.4 L628.4 435.2 L629.7 441.9 L631.0 446.0 L632.6 447.6 L633.9 442.7 L635.7 439.8 L636.9 435.0 L638.8 435.9 L641.6 432.2 L643.0 443.7 L644.8 436.8 L645.8 438.1 L647.7 430.0 L649.0 432.3 L650.9 442.8 L651.8 433.6 L653.5 432.3 L655.0 428.8 L656.7 431.9 L657.9 441.0 L659.6 424.2 L660.7 439.0 L662.4 440.8 L663.8 426.9 L665.3 434.0 L666.8 436.4 L668.1 428.0 L669.6 435.6 L671.3 439.8 L672.8 441.9 L673.8 430.7 L675.5 441.5 L677.0 432.8 L678.9 440.6 L679.8 440.6 L681.5 438.1 L683.1 435.2 L685.3 439.3 L687.5 430.7 L688.7 431.9 L691.3 428.4 L692.9 430.0 L694.8 435.0 L697.6 427.3 L698.9 432.7 L700.8 428.6 L702.5 431.1 L704.4 436.9 L706.3 437.9 L707.9 432.3 L709.5 434.8 L710.7 426.5 L712.7 439.6 L713.9 436.9 L715.5 443.3 L716.3 430.2 L716.9 429.5 L718.5 432.3 L719.8 428.2 L721.6 430.9 L722.6 440.4 L724.5 434.5 L725.8 437.2 L727.5 426.1 L728.7 435.7 L730.0 425.2 L731.8 431.9 L734.1 430.3 L736.0 423.6 L737.6 434.7 L739.8 432.1 L741.7 429.8 L743.6 435.7 L744.9 435.9 L746.6 447.6 L749.6 427.1 L750.9 430.3 L752.5 428.0 L753.8 429.0 L755.5 437.7 L757.0 428.2 L757.0 452.0 L475.0 452.0 Z" fill="#73bf69" fill-opacity="0.20"/><path d="M475.0 425.1 L476.3 431.3 L477.5 430.9 L478.6 430.7 L479.5 431.1 L481.1 430.5 L482.0 431.5 L483.9 437.1 L484.9 436.5 L486.7 437.9 L488.0 436.5 L489.9 427.1 L490.9 434.6 L492.2 431.9 L493.8 429.8 L495.6 437.1 L496.9 430.7 L498.2 432.3 L499.8 437.1 L501.7 434.6 L503.0 434.4 L504.5 430.2 L505.8 439.3 L508.7 428.9 L510.3 439.5 L511.9 436.9 L513.2 429.8 L514.8 429.3 L516.0 430.9 L518.0 439.7 L519.3 435.0 L520.8 438.1 L522.7 433.4 L524.4 432.0 L526.2 432.3 L527.2 432.9 L528.2 439.4 L529.7 451.2 L531.0 432.0 L532.9 440.2 L534.2 430.2 L536.1 430.9 L537.4 432.3 L538.6 440.6 L539.9 435.6 L540.9 435.9 L542.7 445.2 L544.0 428.4 L545.0 434.0 L546.9 441.5 L548.8 439.0 L550.3 432.5 L552.0 436.5 L553.3 436.7 L554.8 426.9 L555.9 440.4 L557.6 444.6 L558.8 432.0 L560.5 436.5 L562.0 443.7 L563.3 439.4 L564.9 435.1 L566.5 440.4 L567.7 433.4 L569.4 441.8 L570.9 434.0 L572.4 432.4 L573.7 440.5 L575.0 423.8 L576.3 429.8 L577.9 436.9 L579.8 443.9 L581.1 437.1 L583.6 431.1 L585.6 443.3 L587.1 432.3 L588.7 440.5 L590.0 434.4 L591.5 434.0 L592.8 428.5 L594.5 436.9 L595.7 438.3 L597.6 432.2 L598.9 433.2 L600.4 430.7 L602.1 435.4 L603.4 439.3 L605.9 420.5 L607.6 437.1 L608.8 431.2 L610.6 441.8 L611.9 433.4 L613.6 441.2 L614.8 433.7 L616.7 441.5 L617.8 428.6 L619.5 427.4 L620.8 434.4 L622.5 437.3 L623.7 443.9 L625.6 434.4 L626.9 436.4 L628.4 435.2 L629.7 441.9 L631.0 446.0 L632.6 447.6 L633.9 442.7 L635.7 439.8 L636.9 435.0 L638.8 435.9 L641.6 432.2 L643.0 443.7 L644.8 436.8 L645.8 438.1 L647.7 430.0 L649.0 432.3 L650.9 442.8 L651.8 433.6 L653.5 432.3 L655.0 428.8 L656.7 431.9 L657.9 441.0 L659.6 424.2 L660.7 439.0 L662.4 440.8 L663.8 426.9 L665.3 434.0 L666.8 436.4 L668.1 428.0 L669.6 435.6 L671.3 439.8 L672.8 441.9 L673.8 430.7 L675.5 441.5 L677.0 432.8 L678.9 440.6 L679.8 440.6 L681.5 438.1 L683.1 435.2 L685.3 439.3 L687.5 430.7 L688.7 431.9 L691.3 428.4 L692.9 430.0 L694.8 435.0 L697.6 427.3 L698.9 432.7 L700.8 428.6 L702.5 431.1 L704.4 436.9 L706.3 437.9 L707.9 432.3 L709.5 434.8 L710.7 426.5 L712.7 439.6 L713.9 436.9 L715.5 443.3 L716.3 430.2 L716.9 429.5 L718.5 432.3 L719.8 428.2 L721.6 430.9 L722.6 440.4 L724.5 434.5 L725.8 437.2 L727.5 426.1 L728.7 435.7 L730.0 425.2 L731.8 431.9 L734.1 430.3 L736.0 423.6 L737.6 434.7 L739.8 432.1 L741.7 429.8 L743.6 435.7 L744.9 435.9 L746.6 447.6 L749.6 427.1 L750.9 430.3 L752.5 428.0 L753.8 429.0 L755.5 437.7 L757.0 428.2" stroke="#73bf69" stroke-width="1.3" fill="none" stroke-linejoin="round"/><circle cx="605.8" cy="424.2" r="2.6" fill="#73bf69"/><path d="M767.0 449.6 L768.3 449.6 L769.6 449.6 L770.8 449.6 L772.1 448.9 L773.4 448.4 L774.7 448.5 L776.0 449.1 L777.2 448.8 L778.5 448.6 L779.8 449.8 L781.1 448.8 L782.4 448.4 L783.6 448.6 L784.9 448.6 L786.2 449.1 L787.5 449.7 L788.8 448.6 L790.0 449.4 L791.3 448.6 L792.6 448.3 L793.9 449.3 L795.2 449.3 L796.4 448.3 L797.7 448.7 L799.0 449.7 L800.3 449.8 L801.6 449.7 L802.9 448.4 L804.1 448.5 L805.4 449.7 L806.7 448.5 L808.0 448.2 L809.3 448.8 L810.5 449.4 L811.8 447.9 L813.1 445.1 L814.4 446.1 L815.7 447.9 L816.9 448.8 L818.2 449.1 L819.5 448.3 L820.8 449.2 L822.1 448.4 L823.3 448.5 L824.6 449.6 L825.9 449.5 L827.2 449.5 L828.5 449.6 L829.7 448.9 L831.0 449.5 L832.3 449.2 L833.6 449.8 L834.9 448.4 L836.1 449.4 L837.4 449.2 L838.7 448.9 L840.0 448.4 L841.3 449.2 L842.5 448.3 L843.8 449.1 L845.1 449.0 L846.4 449.1 L847.7 450.0 L848.9 449.2 L850.2 449.7 L851.5 450.0 L852.8 448.6 L854.1 449.7 L855.3 449.1 L856.6 448.7 L857.9 449.0 L859.2 449.4 L860.5 449.1 L861.8 449.0 L863.0 448.6 L864.3 449.8 L865.6 449.0 L866.9 449.6 L868.2 449.5 L869.4 448.6 L870.7 449.1 L872.0 449.0 L873.3 448.6 L874.6 448.4 L875.8 449.2 L877.1 448.9 L878.4 449.1 L879.7 449.1 L881.0 448.8 L882.2 449.2 L883.5 449.0 L884.8 449.1 L886.1 448.3 L887.4 448.7 L888.6 448.4 L889.9 448.3 L891.2 449.5 L892.5 449.0 L893.8 448.3 L895.0 448.5 L896.3 449.8 L897.6 449.8 L898.9 449.2 L900.2 449.9 L901.4 449.6 L902.7 449.9 L904.0 448.8 L905.3 448.6 L906.6 448.4 L907.8 449.7 L909.0 449.5 L910.4 420.0 L911.8 449.5 L913.0 448.4 L914.2 448.3 L915.5 449.6 L916.8 448.3 L918.1 449.3 L919.4 449.1 L920.7 448.2 L921.9 448.5 L923.2 449.7 L924.5 449.2 L925.8 449.1 L927.1 449.4 L928.3 449.6 L929.6 449.4 L930.9 448.7 L932.2 450.0 L933.5 449.0 L934.7 449.2 L936.0 450.0 L937.3 449.4 L938.6 448.9 L939.9 449.1 L941.1 448.5 L942.4 441.6 L943.7 442.4 L945.0 447.3 L946.3 449.8 L947.5 449.5 L948.8 449.9 L950.1 448.6 L951.4 449.5 L952.7 449.8 L953.9 449.2 L955.2 448.4 L956.5 448.5 L957.8 449.5 L959.1 449.7 L960.3 448.3 L961.6 449.0 L962.9 448.7 L964.2 447.5 L965.5 446.8 L966.7 448.3 L968.0 449.2 L969.3 449.9 L970.6 448.3 L971.9 448.9 L973.1 448.6 L974.4 449.8 L975.7 448.5 L977.0 449.9 L978.3 448.4 L979.6 449.2 L980.8 449.4 L982.1 449.0 L983.4 448.3 L984.7 449.5 L986.0 449.8 L987.2 449.1 L988.5 449.6 L989.8 449.8 L991.1 449.7 L992.4 449.9 L993.6 449.6 L994.9 449.4 L996.2 449.5 L997.5 448.6 L998.8 449.5 L1000.0 449.1 L1001.3 449.7 L1002.6 449.4 L1003.9 450.0 L1005.2 449.5 L1006.4 450.0 L1007.7 448.7 L1009.0 449.0 L1009.0 452.0 L767.0 452.0 Z" fill="#ec5a52" fill-opacity="0.20"/><path d="M767.0 449.6 L768.3 449.6 L769.6 449.6 L770.8 449.6 L772.1 448.9 L773.4 448.4 L774.7 448.5 L776.0 449.1 L777.2 448.8 L778.5 448.6 L779.8 449.8 L781.1 448.8 L782.4 448.4 L783.6 448.6 L784.9 448.6 L786.2 449.1 L787.5 449.7 L788.8 448.6 L790.0 449.4 L791.3 448.6 L792.6 448.3 L793.9 449.3 L795.2 449.3 L796.4 448.3 L797.7 448.7 L799.0 449.7 L800.3 449.8 L801.6 449.7 L802.9 448.4 L804.1 448.5 L805.4 449.7 L806.7 448.5 L808.0 448.2 L809.3 448.8 L810.5 449.4 L811.8 447.9 L813.1 445.1 L814.4 446.1 L815.7 447.9 L816.9 448.8 L818.2 449.1 L819.5 448.3 L820.8 449.2 L822.1 448.4 L823.3 448.5 L824.6 449.6 L825.9 449.5 L827.2 449.5 L828.5 449.6 L829.7 448.9 L831.0 449.5 L832.3 449.2 L833.6 449.8 L834.9 448.4 L836.1 449.4 L837.4 449.2 L838.7 448.9 L840.0 448.4 L841.3 449.2 L842.5 448.3 L843.8 449.1 L845.1 449.0 L846.4 449.1 L847.7 450.0 L848.9 449.2 L850.2 449.7 L851.5 450.0 L852.8 448.6 L854.1 449.7 L855.3 449.1 L856.6 448.7 L857.9 449.0 L859.2 449.4 L860.5 449.1 L861.8 449.0 L863.0 448.6 L864.3 449.8 L865.6 449.0 L866.9 449.6 L868.2 449.5 L869.4 448.6 L870.7 449.1 L872.0 449.0 L873.3 448.6 L874.6 448.4 L875.8 449.2 L877.1 448.9 L878.4 449.1 L879.7 449.1 L881.0 448.8 L882.2 449.2 L883.5 449.0 L884.8 449.1 L886.1 448.3 L887.4 448.7 L888.6 448.4 L889.9 448.3 L891.2 449.5 L892.5 449.0 L893.8 448.3 L895.0 448.5 L896.3 449.8 L897.6 449.8 L898.9 449.2 L900.2 449.9 L901.4 449.6 L902.7 449.9 L904.0 448.8 L905.3 448.6 L906.6 448.4 L907.8 449.7 L909.0 449.5 L910.4 420.0 L911.8 449.5 L913.0 448.4 L914.2 448.3 L915.5 449.6 L916.8 448.3 L918.1 449.3 L919.4 449.1 L920.7 448.2 L921.9 448.5 L923.2 449.7 L924.5 449.2 L925.8 449.1 L927.1 449.4 L928.3 449.6 L929.6 449.4 L930.9 448.7 L932.2 450.0 L933.5 449.0 L934.7 449.2 L936.0 450.0 L937.3 449.4 L938.6 448.9 L939.9 449.1 L941.1 448.5 L942.4 441.6 L943.7 442.4 L945.0 447.3 L946.3 449.8 L947.5 449.5 L948.8 449.9 L950.1 448.6 L951.4 449.5 L952.7 449.8 L953.9 449.2 L955.2 448.4 L956.5 448.5 L957.8 449.5 L959.1 449.7 L960.3 448.3 L961.6 449.0 L962.9 448.7 L964.2 447.5 L965.5 446.8 L966.7 448.3 L968.0 449.2 L969.3 449.9 L970.6 448.3 L971.9 448.9 L973.1 448.6 L974.4 449.8 L975.7 448.5 L977.0 449.9 L978.3 448.4 L979.6 449.2 L980.8 449.4 L982.1 449.0 L983.4 448.3 L984.7 449.5 L986.0 449.8 L987.2 449.1 L988.5 449.6 L989.8 449.8 L991.1 449.7 L992.4 449.9 L993.6 449.6 L994.9 449.4 L996.2 449.5 L997.5 448.6 L998.8 449.5 L1000.0 449.1 L1001.3 449.7 L1002.6 449.4 L1003.9 450.0 L1005.2 449.5 L1006.4 450.0 L1007.7 448.7 L1009.0 449.0" stroke="#ec5a52" stroke-width="1.2" fill="none" stroke-linejoin="round"/><path d="M254.7 414.6 V423.6 M250.2 419.1 L254.7 423.6 L259.2 419.1" stroke="#f2495c" stroke-width="1.8" fill="none" stroke-linecap="round" stroke-linejoin="round"/><path d="M621.5 415.0 V424.0 M617.0 419.5 L621.5 424.0 L626.0 419.5" stroke="#f2495c" stroke-width="1.8" fill="none" stroke-linecap="round" stroke-linejoin="round"/><path d="M890.0 423.6 V414.4 M885.4 419.0 L890.0 414.4 L894.6 419.0" stroke="#73bf69" stroke-width="1.8" fill="none" stroke-linecap="round" stroke-linejoin="round"/></svg>
<div style="position:absolute;left:15px;top:461px;width:994px;height:27px;background:#181b1f"></div>
<div style="position:absolute;left:15px;top:496px;width:994px;height:27px;background:#181b1f"></div>
<svg style="position:absolute;left:0;top:0" width="1024" height="862"><path d="M24.3 471.5 L27.3 474.5 L24.3 477.5" stroke="#ccccdc" stroke-width="1.4" fill="none" stroke-linecap="round" stroke-linejoin="round"/><rect x="998.0" y="465.3" width="2.6" height="2.6" fill="rgba(204,204,220,0.2)"/><rect x="998.0" y="470.5" width="2.6" height="2.6" fill="rgba(204,204,220,0.2)"/><rect x="998.0" y="475.6" width="2.6" height="2.6" fill="rgba(204,204,220,0.2)"/><rect x="998.0" y="480.8" width="2.6" height="2.6" fill="rgba(204,204,220,0.2)"/><rect x="1003.0" y="465.3" width="2.6" height="2.6" fill="rgba(204,204,220,0.2)"/><rect x="1003.0" y="470.5" width="2.6" height="2.6" fill="rgba(204,204,220,0.2)"/><rect x="1003.0" y="475.6" width="2.6" height="2.6" fill="rgba(204,204,220,0.2)"/><rect x="1003.0" y="480.8" width="2.6" height="2.6" fill="rgba(204,204,220,0.2)"/><path d="M24.3 506.5 L27.3 509.5 L24.3 512.5" stroke="#ccccdc" stroke-width="1.4" fill="none" stroke-linecap="round" stroke-linejoin="round"/><rect x="998.0" y="500.3" width="2.6" height="2.6" fill="rgba(204,204,220,0.2)"/><rect x="998.0" y="505.5" width="2.6" height="2.6" fill="rgba(204,204,220,0.2)"/><rect x="998.0" y="510.6" width="2.6" height="2.6" fill="rgba(204,204,220,0.2)"/><rect x="998.0" y="515.8" width="2.6" height="2.6" fill="rgba(204,204,220,0.2)"/><rect x="1003.0" y="500.3" width="2.6" height="2.6" fill="rgba(204,204,220,0.2)"/><rect x="1003.0" y="505.5" width="2.6" height="2.6" fill="rgba(204,204,220,0.2)"/><rect x="1003.0" y="510.6" width="2.6" height="2.6" fill="rgba(204,204,220,0.2)"/><rect x="1003.0" y="515.8" width="2.6" height="2.6" fill="rgba(204,204,220,0.2)"/><path d="M23 544 L26 547 L29 544" stroke="#ccccdc" stroke-width="1.4" fill="none" stroke-linecap="round" stroke-linejoin="round"/></svg>
<div class="p" style="left:15px;top:566px;width:494px;height:273px;"></div>
<div class="p" style="left:516px;top:566px;width:494px;height:273px;"></div>
<div class="p" style="left:15px;top:846px;width:494px;height:55px;"></div>
<div class="p" style="left:516px;top:846px;width:494px;height:55px;"></div>
<svg style="position:absolute;left:0;top:0" width="1024" height="862"><rect x="56" y="610.6" width="438" height="1" fill="rgba(204,204,220,0.1)"/><rect x="56" y="647.7" width="438" height="1" fill="rgba(204,204,220,0.1)"/><rect x="56" y="685.0" width="438" height="1" fill="rgba(204,204,220,0.1)"/><rect x="56" y="722.5" width="438" height="1" fill="rgba(204,204,220,0.1)"/><rect x="56" y="759.3" width="438" height="1" fill="rgba(204,204,220,0.1)"/><rect x="55.4" y="611" width="1" height="182" fill="rgba(204,204,220,0.1)"/><rect x="126.1" y="611" width="1" height="182" fill="rgba(204,204,220,0.1)"/><rect x="192.7" y="611" width="1" height="182" fill="rgba(204,204,220,0.1)"/><rect x="262.5" y="611" width="1" height="182" fill="rgba(204,204,220,0.1)"/><rect x="332.5" y="611" width="1" height="182" fill="rgba(204,204,220,0.1)"/><rect x="402.5" y="611" width="1" height="182" fill="rgba(204,204,220,0.1)"/><rect x="472.2" y="611" width="1" height="182" fill="rgba(204,204,220,0.1)"/><path d="M55.9 650.4 C56.1 653.4 57.5 677.3 57.9 680.0 C58.3 682.8 59.5 678.4 59.9 678.1 C60.2 677.8 61.1 677.0 61.4 677.1 C61.7 677.2 62.4 679.1 62.8 679.0 C63.2 678.9 65.0 675.9 65.4 676.1 C65.8 676.3 66.3 677.9 66.8 681.0 C67.2 684.2 69.3 705.3 69.7 707.7 C70.2 710.0 70.9 704.3 71.3 704.7 C71.7 705.1 73.6 711.6 74.1 711.6 C74.5 711.6 75.5 709.8 76.0 704.7 C76.5 699.6 78.5 661.2 79.0 660.3 C79.5 659.4 80.2 693.5 80.6 695.8 C80.9 698.1 82.1 685.3 82.6 683.0 C83.0 680.7 84.6 670.3 85.1 672.7 C85.6 675.2 87.4 707.2 87.9 707.7 C88.4 708.1 89.5 679.3 89.9 677.1 C90.2 674.8 91.4 681.9 91.8 685.0 C92.3 688.0 93.8 706.6 94.4 707.7 C94.9 708.7 96.9 697.1 97.3 695.8 C97.8 694.5 98.9 696.9 99.3 694.8 C99.8 692.8 101.3 672.8 101.7 675.1 C102.1 677.4 103.0 718.7 103.7 718.1 C104.3 717.5 107.5 668.7 108.2 668.8 C108.9 668.9 110.1 715.1 110.6 718.9 C111.1 722.7 112.7 711.2 113.1 706.7 C113.6 702.1 114.6 676.7 115.1 673.1 C115.6 669.5 117.2 670.3 117.7 670.8 C118.1 671.3 118.9 673.1 119.4 678.1 C119.9 683.0 122.1 718.1 122.6 720.1 C123.1 722.1 124.1 698.5 124.6 697.8 C125.0 697.0 126.4 713.4 126.9 712.6 C127.5 711.8 129.3 692.8 129.9 689.9 C130.4 687.0 131.9 683.9 132.5 683.4 C133.0 682.9 134.8 684.5 135.2 685.0 C135.7 685.4 136.5 684.6 136.8 687.9 C137.1 691.3 138.0 709.8 138.4 718.5 C138.8 727.2 140.3 778.2 140.7 774.7 C141.2 771.2 142.2 688.6 142.7 683.4 C143.2 678.2 145.2 723.3 145.7 722.4 C146.2 721.6 147.2 679.5 147.7 675.1 C148.1 670.7 150.1 677.1 150.6 678.1 C151.1 679.0 152.2 680.3 152.6 685.0 C153.0 689.6 154.2 722.9 154.6 724.4 C155.0 726.0 156.2 702.6 156.5 700.4 C156.9 698.1 157.7 697.2 158.1 701.7 C158.5 706.3 160.4 749.7 160.9 746.1 C161.3 742.6 162.5 671.6 162.8 666.2 C163.2 660.9 164.0 686.6 164.4 692.9 C164.9 699.1 166.8 726.0 167.4 728.4 C168.0 730.7 169.8 720.8 170.3 716.5 C170.9 712.3 172.2 687.1 172.7 686.0 C173.2 684.8 174.8 702.7 175.3 704.7 C175.7 706.7 176.8 710.2 177.2 705.7 C177.7 701.1 179.2 657.5 179.6 659.3 C180.0 661.1 180.9 715.1 181.3 723.4 C181.7 731.8 183.4 747.2 183.9 743.2 C184.3 739.2 185.4 687.2 185.9 683.4 C186.3 679.5 187.9 699.1 188.4 704.7 C188.9 710.3 190.3 737.8 190.8 739.2 C191.2 740.6 192.3 722.6 192.8 718.5 C193.2 714.4 194.8 697.9 195.3 698.4 C195.8 698.9 197.3 724.3 197.7 723.4 C198.1 722.6 199.2 689.2 199.7 689.9 C200.1 690.5 201.7 729.6 202.2 729.9 C202.7 730.2 204.1 697.3 204.6 692.9 C205.1 688.4 206.5 682.2 207.0 685.4 C207.4 688.5 208.5 728.1 208.9 724.0 C209.3 719.9 210.5 649.6 210.9 644.5 C211.3 639.4 212.4 666.9 212.9 673.1 C213.3 679.3 214.9 700.0 215.4 706.7 C216.0 713.4 217.9 740.1 218.4 740.2 C218.9 740.3 219.8 713.8 220.4 707.7 C221.0 701.5 223.6 676.1 224.3 679.0 C225.0 682.0 226.7 736.7 227.3 737.2 C227.8 737.8 229.2 686.3 229.6 685.0 C230.1 683.6 231.8 723.0 232.2 724.0 C232.7 725.0 233.7 697.9 234.2 694.8 C234.6 691.7 236.1 695.7 236.6 692.9 C237.0 690.1 238.1 665.4 238.5 666.8 C239.0 668.2 240.6 702.0 241.1 706.7 C241.5 711.3 242.6 715.8 243.1 713.6 C243.6 711.4 245.5 687.0 246.0 684.6 C246.5 682.1 247.6 689.7 248.0 688.9 C248.4 688.2 249.9 676.0 250.4 677.1 C250.9 678.2 252.5 695.7 252.9 699.8 C253.4 703.9 254.3 725.2 254.9 718.1 C255.5 711.0 258.2 629.8 258.8 628.7 C259.5 627.7 261.0 702.6 261.4 707.7 C261.9 712.7 262.9 677.2 263.4 679.4 C263.9 681.7 265.7 728.9 266.1 729.9 C266.6 731.0 267.7 690.2 268.1 689.9 C268.6 689.6 270.2 727.2 270.7 727.4 C271.1 727.5 272.2 691.2 272.7 691.3 C273.1 691.4 275.2 730.8 275.6 728.4 C276.1 726.0 276.8 673.9 277.2 667.2 C277.6 660.5 279.5 658.9 280.0 661.7 C280.4 664.4 281.5 690.1 281.9 694.8 C282.4 699.5 284.0 704.1 284.5 708.6 C284.9 713.2 286.0 741.6 286.5 740.2 C287.0 738.8 288.9 698.4 289.4 694.8 C289.9 691.2 291.0 703.9 291.4 704.3 C291.8 704.7 293.3 696.2 293.8 698.8 C294.2 701.4 295.3 725.2 295.7 730.3 C296.1 735.5 297.3 747.3 297.7 750.1 C298.2 752.8 299.8 759.1 300.3 757.6 C300.7 756.0 301.8 738.0 302.2 734.3 C302.7 730.6 304.5 724.1 305.0 720.5 C305.5 716.8 306.4 699.7 306.9 697.8 C307.4 695.9 309.1 703.1 309.9 701.7 C310.6 700.4 313.6 680.8 314.2 684.6 C314.9 688.3 315.9 737.1 316.4 739.2 C316.9 741.4 318.7 708.7 319.1 706.1 C319.6 703.4 320.3 715.8 320.7 712.6 C321.2 709.4 323.2 676.9 323.7 674.1 C324.2 671.4 325.2 678.9 325.6 685.0 C326.1 691.0 328.2 734.1 328.6 734.7 C329.0 735.3 329.6 695.9 330.0 690.9 C330.4 685.9 332.1 687.2 332.6 685.0 C333.0 682.7 334.4 668.4 334.9 668.2 C335.4 668.0 337.0 677.2 337.5 683.0 C337.9 688.8 339.0 730.0 339.5 726.4 C339.9 722.7 341.6 647.5 342.0 646.5 C342.5 645.5 343.4 708.6 343.8 716.5 C344.2 724.4 345.9 731.1 346.4 725.4 C346.8 719.7 348.1 662.6 348.5 659.3 C349.0 656.1 350.4 688.4 350.9 692.9 C351.4 697.4 352.8 707.2 353.3 704.3 C353.7 701.4 354.8 664.6 355.2 664.3 C355.7 663.9 357.1 695.1 357.6 700.7 C358.1 706.4 359.7 717.5 360.2 720.5 C360.7 723.5 362.1 735.1 362.5 730.7 C362.9 726.4 363.7 677.3 364.1 677.1 C364.5 676.8 366.2 727.3 366.7 728.4 C367.2 729.4 368.5 687.7 369.0 687.3 C369.6 686.9 371.6 720.7 372.0 724.4 C372.4 728.1 373.0 725.6 373.4 724.4 C373.8 723.2 375.4 715.1 376.0 712.6 C376.5 710.0 377.9 698.2 378.5 698.8 C379.1 699.3 381.2 720.2 381.9 718.1 C382.5 716.0 384.7 681.0 385.2 677.5 C385.8 674.0 386.6 684.1 387.2 683.0 C387.8 681.9 390.5 667.1 391.1 666.2 C391.8 665.3 393.2 671.0 393.7 674.1 C394.3 677.3 395.9 699.1 396.7 697.8 C397.4 696.5 400.4 662.0 401.0 660.9 C401.6 659.8 402.5 685.9 403.0 686.5 C403.5 687.2 405.4 668.0 405.9 667.2 C406.5 666.5 408.0 675.1 408.5 679.0 C409.1 683.0 410.9 703.4 411.5 706.7 C412.1 709.9 413.9 713.8 414.4 711.6 C415.0 709.4 416.5 686.4 417.0 685.0 C417.5 683.5 418.9 699.6 419.4 696.8 C419.8 694.0 420.8 655.1 421.3 657.3 C421.8 659.6 423.8 714.6 424.3 719.5 C424.8 724.4 425.8 704.9 426.3 706.7 C426.7 708.4 428.3 740.4 428.6 737.2 C429.0 734.1 429.8 681.7 430.0 675.1 C430.2 668.5 430.5 670.6 430.9 671.6 C431.2 672.6 433.0 685.6 433.4 685.0 C433.9 684.4 434.9 666.0 435.4 665.3 C435.9 664.6 437.7 672.3 438.2 678.1 C438.6 683.9 439.3 721.8 439.7 723.5 C440.2 725.2 442.2 696.8 442.7 695.3 C443.2 693.7 444.2 712.3 444.7 708.3 C445.1 704.3 446.8 656.1 447.2 655.4 C447.7 654.7 448.8 701.6 449.2 701.2 C449.6 700.7 450.7 652.9 451.2 651.0 C451.7 649.2 453.3 680.6 453.9 683.0 C454.6 685.4 456.8 679.1 457.5 675.1 C458.1 671.2 459.9 641.4 460.5 643.6 C461.0 645.7 462.4 692.4 463.0 696.4 C463.6 700.5 465.7 686.3 466.4 684.0 C467.0 681.7 468.7 671.5 469.3 673.2 C469.9 674.8 471.8 697.9 472.3 700.8 C472.8 703.6 473.8 696.1 474.3 701.8 C474.7 707.5 476.1 761.8 476.8 757.6 C477.6 753.5 480.9 668.6 481.6 660.3 C482.2 652.1 483.1 674.7 483.5 675.1 C484.0 675.5 485.7 664.9 486.1 664.3 C486.6 663.7 487.6 664.6 488.1 669.2 C488.5 673.8 490.2 711.0 490.7 710.7 C491.1 710.3 492.8 669.8 493.0 665.3" stroke="#73bf69" stroke-width="1.4" fill="none" stroke-linejoin="round"/><rect x="27.5" y="820.5" width="12" height="3" rx="1.5" fill="#73bf69"/></svg>
<svg style="position:absolute;left:0;top:0" width="1024" height="862"><path d="M533.0 631.5 V640.8 M528.4 636.1 L533.0 640.8 L537.6 636.1" stroke="#f2495c" stroke-width="1.9" fill="none" stroke-linecap="round" stroke-linejoin="round"/><path d="M517.5 715.3 L518.8 715.1 L520.2 714.7 L521.5 715.4 L522.8 714.8 L524.1 715.1 L525.5 715.1 L526.8 714.7 L528.1 715.1 L529.4 715.0 L530.8 714.9 L532.1 714.6 L533.4 715.2 L534.8 714.8 L536.1 714.9 L537.4 714.9 L538.7 715.1 L540.1 715.2 L541.4 715.5 L542.7 715.4 L544.1 715.4 L545.4 714.8 L546.7 715.3 L548.0 715.4 L549.4 715.4 L550.7 714.7 L552.0 714.7 L553.3 714.9 L554.7 715.2 L556.0 715.3 L557.3 715.2 L558.7 715.1 L560.0 715.4 L561.3 715.1 L562.6 715.3 L564.0 714.6 L565.3 714.6 L566.6 715.0 L568.0 715.3 L569.3 714.6 L570.6 715.2 L571.9 715.2 L573.3 715.5 L574.6 715.2 L575.9 715.1 L577.2 715.0 L578.6 715.3 L579.9 715.0 L581.2 715.5 L582.6 715.3 L583.9 715.4 L585.2 715.1 L586.5 715.5 L587.9 715.5 L589.2 715.2 L590.5 715.3 L591.9 715.0 L593.2 715.0 L594.5 714.8 L595.8 714.9" stroke="#f2495c" stroke-width="1.3" fill="none"/><path d="M615.2 631.5 V640.8 M610.5 636.1 L615.2 640.8 L619.8 636.1" stroke="#f2495c" stroke-width="1.9" fill="none" stroke-linecap="round" stroke-linejoin="round"/><path d="M599.8 714.9 L601.2 714.7 L602.5 715.1 L603.8 715.2 L605.1 714.6 L606.5 715.4 L607.8 714.8 L609.1 714.9 L610.5 715.5 L611.8 714.7 L613.1 714.7 L614.4 714.9 L615.8 714.8 L617.1 714.8 L618.4 715.4 L619.7 715.0 L621.1 715.0 L622.4 714.7 L623.7 714.8 L625.1 714.8 L626.4 715.0 L627.7 714.7 L629.0 714.9 L630.4 714.9 L631.7 715.3 L633.0 715.5 L634.4 715.4 L635.7 715.2 L637.0 715.4 L638.3 714.7 L639.7 715.0 L641.0 714.9 L642.3 714.9 L643.6 714.9 L645.0 715.1 L646.3 715.5 L647.6 714.8 L649.0 714.8 L650.3 715.0 L651.6 715.0 L652.9 714.9 L654.3 715.4 L655.6 714.8 L656.9 715.3 L658.3 715.4 L659.6 715.3 L660.9 714.8 L662.2 715.3 L663.6 714.8 L664.9 714.6 L666.2 715.1 L667.5 715.2 L668.9 715.1 L670.2 714.9 L671.5 714.8 L672.9 714.9 L674.2 714.9 L675.5 715.4 L676.8 715.4 L678.2 715.3" stroke="#f2495c" stroke-width="1.3" fill="none"/><path d="M698.0 631.5 V640.8 M693.4 636.1 L698.0 640.8 L702.7 636.1" stroke="#f2495c" stroke-width="1.9" fill="none" stroke-linecap="round" stroke-linejoin="round"/><path d="M682.2 714.8 L683.5 715.2 L684.8 715.0 L686.1 715.5 L687.5 715.4 L688.8 715.3 L690.1 714.9 L691.5 714.9 L692.8 714.9 L694.1 715.2 L695.4 715.0 L696.8 715.1 L698.1 715.1 L699.4 715.4 L700.8 714.7 L702.1 715.3 L703.4 714.6 L704.7 714.7 L706.1 715.5 L707.4 715.1 L708.7 714.8 L710.0 714.6 L711.4 715.1 L712.7 715.3 L714.0 715.3 L715.4 714.6 L716.7 715.3 L718.0 715.0 L719.3 715.4 L720.7 715.0 L722.0 714.6 L723.3 715.4 L724.7 714.8 L726.0 715.0 L727.3 714.7 L728.6 714.9 L730.0 715.3 L731.3 714.7 L732.6 715.1 L733.9 715.5 L735.3 715.5 L736.6 715.1 L737.9 715.1 L739.3 715.2 L740.6 715.4 L741.9 715.2 L743.2 715.2 L744.6 714.7 L745.9 715.5 L747.2 714.8 L748.6 714.7 L749.9 715.4 L751.2 714.7 L752.5 714.9 L753.9 714.7 L755.2 715.2 L756.5 715.2 L757.8 715.1 L759.2 714.6 L760.5 715.0" stroke="#f2495c" stroke-width="1.3" fill="none"/><path d="M780.2 631.5 V640.8 M775.5 636.1 L780.2 640.8 L784.8 636.1" stroke="#f2495c" stroke-width="1.9" fill="none" stroke-linecap="round" stroke-linejoin="round"/><path d="M764.5 715.2 L765.8 715.1 L767.2 715.3 L768.5 715.5 L769.8 715.4 L771.1 714.7 L772.5 715.2 L773.8 714.7 L775.1 715.3 L776.4 715.3 L777.8 715.0 L779.1 715.3 L780.4 715.2 L781.8 714.6 L783.1 714.7 L784.4 714.8 L785.7 714.9 L787.1 714.7 L788.4 714.7 L789.7 715.0 L791.1 714.9 L792.4 715.5 L793.7 714.8 L795.0 715.1 L796.4 714.8 L797.7 714.9 L799.0 715.2 L800.3 715.5 L801.7 714.7 L803.0 715.4 L804.3 715.1 L805.7 715.2 L807.0 715.2 L808.3 714.8 L809.6 714.6 L811.0 715.3 L812.3 714.9 L813.6 715.2 L815.0 715.0 L816.3 715.1 L817.6 715.3 L818.9 715.4 L820.3 715.3 L820.8 715.0 L822.3 692.5 L823.8 715.0 L824.2 715.3 L825.6 714.7 L826.9 714.6 L828.2 715.1 L829.6 715.4 L830.9 715.3 L832.2 715.4 L833.5 715.2 L834.9 715.4 L836.2 715.3 L837.5 715.3 L838.9 715.0 L840.2 714.7 L841.5 714.8 L842.8 715.1" stroke="#f2495c" stroke-width="1.3" fill="none"/><path d="M846.8 715.1 L848.2 715.0 L849.5 715.2 L850.8 715.2 L852.1 715.4 L853.5 715.3 L854.8 714.6 L856.1 715.4 L857.5 715.0 L858.8 714.9 L860.1 714.7 L861.4 715.3 L862.8 715.3 L864.1 715.3 L865.4 715.1 L866.7 715.1 L868.1 714.6 L869.4 714.7 L870.7 714.7 L872.1 715.5 L873.4 715.5 L874.7 714.9 L876.0 714.7 L877.4 715.1 L878.7 715.0 L880.0 715.5 L881.4 715.1 L882.7 714.7 L884.0 714.8 L885.3 714.7 L886.7 714.6 L888.0 715.3 L889.3 715.4 L890.6 715.4 L892.0 715.0 L893.3 714.9 L894.6 714.7 L896.0 714.9 L897.3 714.9 L898.6 714.8 L899.9 715.1 L901.3 715.0 L902.6 715.5 L903.9 714.8 L905.3 715.3 L906.6 714.7 L907.9 714.9 L909.2 715.2 L910.6 715.4 L911.9 715.3 L913.2 714.9 L914.5 714.9 L915.9 715.4 L917.2 715.4 L918.5 715.0 L919.9 715.0 L921.2 715.2 L922.5 715.3 L923.8 715.0 L925.2 715.5" stroke="#4b7a45" stroke-width="1.3" fill="none"/><path d="M945.3 631.5 V640.8 M940.6 636.1 L945.3 640.8 L949.9 636.1" stroke="#f2495c" stroke-width="1.9" fill="none" stroke-linecap="round" stroke-linejoin="round"/><path d="M929.2 715.2 L930.5 715.1 L931.8 714.6 L933.1 714.9 L934.5 714.7 L935.8 715.1 L937.1 715.3 L938.5 715.3 L939.8 714.6 L941.1 714.9 L942.4 715.2 L943.8 715.5 L945.1 715.1 L946.4 714.9 L947.8 715.1 L949.1 715.3 L950.4 714.9 L951.7 714.7 L953.1 715.3 L954.4 715.5 L955.7 715.2 L957.0 715.1 L958.4 714.9 L959.7 715.3 L961.0 714.8 L962.4 714.8 L963.7 715.0 L965.0 715.3 L966.3 714.6 L967.7 715.2 L969.0 714.8 L970.3 715.3 L971.7 715.3 L973.0 714.8 L974.3 715.2 L975.6 714.6 L977.0 715.1 L978.3 715.3 L979.6 715.3 L980.9 715.1 L982.3 714.9 L983.6 714.6 L984.9 715.4 L986.3 715.1 L987.6 715.3 L988.9 714.6 L990.2 715.4 L991.6 715.5 L992.9 715.4 L994.2 715.1 L995.6 714.7 L996.9 714.7 L998.2 714.8 L999.5 714.6 L1000.9 714.7 L1002.2 715.2 L1003.5 715.3 L1004.8 714.7 L1006.2 714.8 L1007.5 715.5" stroke="#f2495c" stroke-width="1.3" fill="none"/><path d="M532.5 760.0 V769.5 M527.8 764.8 L532.5 769.5 L537.2 764.8" stroke="#f2495c" stroke-width="1.9" fill="none" stroke-linecap="round" stroke-linejoin="round"/><path d="M517.5 836.9 L519.1 837.1 L520.7 837.1 L522.3 837.1 L523.9 837.2 L525.5 837.3 L527.1 837.1 L528.7 837.1 L530.4 836.7 L532.0 837.2 L533.6 836.7 L535.2 837.2 L536.8 837.1 L538.4 836.8 L540.0 836.8 L541.6 837.0 L543.2 837.3 L544.8 837.0 L546.4 837.1 L548.0 836.7 L549.6 837.2 L551.2 837.1 L552.8 836.8 L554.5 837.3 L556.1 837.1 L557.7 836.8 L559.3 836.8 L560.9 837.3 L562.5 837.3 L564.1 837.3 L565.7 836.7 L567.3 837.1 L568.9 836.9 L570.5 836.8 L572.1 837.1 L573.7 837.1 L575.3 836.7 L577.0 836.9 L578.6 837.1 L580.2 836.9 L581.8 837.1 L583.4 837.1 L585.0 837.3 L586.6 836.8 L588.2 836.8 L589.8 836.9 L591.4 836.7 L593.0 837.3 L594.6 837.2 L596.2 837.0 L597.8 836.7 L599.4 836.7 L601.1 837.1 L602.7 837.1 L604.3 837.0 L605.9 837.0 L607.5 836.7 L609.1 837.2 L610.7 836.8 L612.3 836.9" stroke="#f2495c" stroke-width="1.3" fill="none"/><path d="M632.3 760.0 V769.5 M627.5 764.8 L632.3 769.5 L637.0 764.8" stroke="#f2495c" stroke-width="1.9" fill="none" stroke-linecap="round" stroke-linejoin="round"/><path d="M616.3 830.7 L617.1 831.1 L617.9 832.2 L618.7 834.2 L619.5 834.3 L620.3 834.0 L621.1 831.0 L621.9 835.9 L622.7 835.1 L623.5 831.2 L624.3 834.8 L625.1 836.0 L625.9 836.3 L626.7 832.6 L627.5 834.2 L628.2 829.6 L629.0 830.3 L629.8 829.6 L630.6 834.6 L631.4 835.9 L632.2 835.8 L633.1 834.0 L634.0 815.0 L634.9 834.0 L635.4 834.9 L636.2 833.6 L637.0 832.2 L637.8 831.8 L638.6 831.3 L639.4 830.6 L640.2 831.8 L641.0 835.7 L641.8 830.6 L642.6 834.4 L643.4 832.5 L644.2 833.9 L645.0 831.3 L645.8 835.1 L646.6 834.8 L647.4 834.8 L648.2 835.4 L649.0 830.3 L649.8 832.5 L650.6 834.2 L651.4 833.7 L652.1 829.6 L652.9 832.9 L653.7 834.9 L654.5 830.8 L655.3 831.9 L656.1 829.6 L656.9 835.8 L657.7 833.2 L658.5 830.8 L659.3 830.6 L660.1 830.1 L660.9 836.2 L661.7 834.4 L662.5 835.7 L663.3 835.2 L664.1 829.7 L664.9 832.4 L665.7 830.0 L666.5 833.9 L667.3 830.4 L668.1 833.4 L668.9 834.7 L669.7 831.1 L670.5 829.9 L671.3 835.8 L672.1 834.0 L673.0 751.5 L673.9 834.0 L674.5 833.9 L675.3 835.5 L676.0 835.1 L676.8 834.7 L677.6 832.3 L678.4 831.9 L679.2 835.1 L680.0 836.4 L680.8 834.2 L681.6 831.8 L682.4 835.2 L683.2 834.3 L684.0 835.1 L684.8 830.9 L685.1 834.0 L686.0 810.7 L686.9 834.0 L687.2 835.8 L688.0 833.7 L688.8 832.6 L689.6 832.0 L690.4 835.9 L691.2 835.4 L692.0 831.6 L692.8 833.6 L693.6 834.5 L694.4 834.3 L695.2 829.8 L696.0 834.3 L696.8 832.5 L697.6 834.0 L698.4 833.6 L699.2 830.5 L699.9 829.5 L700.7 834.0 L701.5 835.1 L702.3 831.4 L703.1 835.1 L703.9 836.5 L704.7 830.2 L705.5 833.5 L706.3 830.8 L707.1 833.7 L707.9 830.3 L708.7 833.3 L709.5 835.4 L710.3 836.4 L711.1 832.6 L711.1 838.0 L616.3 838.0 Z" fill="#f2495c" fill-opacity="0.25"/><path d="M616.3 830.7 L617.1 831.1 L617.9 832.2 L618.7 834.2 L619.5 834.3 L620.3 834.0 L621.1 831.0 L621.9 835.9 L622.7 835.1 L623.5 831.2 L624.3 834.8 L625.1 836.0 L625.9 836.3 L626.7 832.6 L627.5 834.2 L628.2 829.6 L629.0 830.3 L629.8 829.6 L630.6 834.6 L631.4 835.9 L632.2 835.8 L633.1 834.0 L634.0 815.0 L634.9 834.0 L635.4 834.9 L636.2 833.6 L637.0 832.2 L637.8 831.8 L638.6 831.3 L639.4 830.6 L640.2 831.8 L641.0 835.7 L641.8 830.6 L642.6 834.4 L643.4 832.5 L644.2 833.9 L645.0 831.3 L645.8 835.1 L646.6 834.8 L647.4 834.8 L648.2 835.4 L649.0 830.3 L649.8 832.5 L650.6 834.2 L651.4 833.7 L652.1 829.6 L652.9 832.9 L653.7 834.9 L654.5 830.8 L655.3 831.9 L656.1 829.6 L656.9 835.8 L657.7 833.2 L658.5 830.8 L659.3 830.6 L660.1 830.1 L660.9 836.2 L661.7 834.4 L662.5 835.7 L663.3 835.2 L664.1 829.7 L664.9 832.4 L665.7 830.0 L666.5 833.9 L667.3 830.4 L668.1 833.4 L668.9 834.7 L669.7 831.1 L670.5 829.9 L671.3 835.8 L672.1 834.0 L673.0 751.5 L673.9 834.0 L674.5 833.9 L675.3 835.5 L676.0 835.1 L676.8 834.7 L677.6 832.3 L678.4 831.9 L679.2 835.1 L680.0 836.4 L680.8 834.2 L681.6 831.8 L682.4 835.2 L683.2 834.3 L684.0 835.1 L684.8 830.9 L685.1 834.0 L686.0 810.7 L686.9 834.0 L687.2 835.8 L688.0 833.7 L688.8 832.6 L689.6 832.0 L690.4 835.9 L691.2 835.4 L692.0 831.6 L692.8 833.6 L693.6 834.5 L694.4 834.3 L695.2 829.8 L696.0 834.3 L696.8 832.5 L697.6 834.0 L698.4 833.6 L699.2 830.5 L699.9 829.5 L700.7 834.0 L701.5 835.1 L702.3 831.4 L703.1 835.1 L703.9 836.5 L704.7 830.2 L705.5 833.5 L706.3 830.8 L707.1 833.7 L707.9 830.3 L708.7 833.3 L709.5 835.4 L710.3 836.4 L711.1 832.6" stroke="#f2495c" stroke-width="1.2" fill="none" stroke-linejoin="round"/><path d="M731.0 760.0 V769.5 M726.2 764.8 L731.0 769.5 L735.8 764.8" stroke="#f2495c" stroke-width="1.9" fill="none" stroke-linecap="round" stroke-linejoin="round"/><path d="M715.1 836.9 L716.7 836.8 L718.3 837.2 L719.9 836.9 L721.5 837.1 L723.1 837.0 L724.7 837.2 L726.3 837.1 L728.0 837.0 L729.6 836.7 L731.2 837.2 L732.8 837.0 L734.4 836.8 L736.0 836.7 L737.6 837.2 L739.2 837.2 L740.8 836.7 L742.4 836.7 L744.0 837.0 L745.6 837.3 L747.2 836.7 L748.8 837.1 L750.4 836.8 L752.1 836.9 L753.7 836.8 L755.3 837.2 L756.9 836.8 L758.5 837.2 L760.1 837.1 L761.7 836.8 L763.3 836.8 L764.9 837.2 L766.5 837.2 L768.1 837.1 L769.7 837.0 L771.3 837.1 L772.9 837.2 L774.6 837.2 L776.2 836.9 L777.8 836.8 L779.4 837.3 L781.0 837.0 L782.6 836.8 L784.2 837.3 L785.8 836.8 L787.4 837.2 L789.0 836.9 L790.6 837.0 L792.2 836.9 L793.8 837.1 L795.4 837.0 L797.0 837.0 L798.7 837.0 L800.3 836.9 L801.9 837.0 L803.5 837.0 L805.1 837.3 L806.7 836.9 L808.3 837.0 L809.9 837.2" stroke="#f2495c" stroke-width="1.3" fill="none"/><path d="M829.5 769.5 V760.0 M824.8 764.8 L829.5 760.0 L834.2 764.8" stroke="#73bf69" stroke-width="1.9" fill="none" stroke-linecap="round" stroke-linejoin="round"/><path d="M813.9 836.8 L815.5 836.8 L817.1 837.0 L818.7 837.2 L820.3 837.0 L821.9 837.2 L823.5 837.2 L825.1 837.0 L826.8 837.2 L828.4 837.0 L830.0 837.0 L831.6 837.3 L833.2 836.9 L834.8 837.3 L836.4 836.9 L838.0 836.8 L839.6 837.0 L841.2 837.3 L842.8 837.0 L844.4 837.1 L846.0 836.7 L847.6 837.2 L849.2 836.8 L850.9 836.7 L852.5 836.9 L854.1 836.8 L855.7 837.2 L857.3 836.7 L858.9 837.0 L860.5 836.7 L862.1 836.8 L863.7 837.2 L865.3 836.8 L866.9 836.7 L868.5 837.3 L870.1 837.1 L871.7 836.8 L873.4 837.2 L875.0 836.8 L876.6 837.1 L878.2 836.8 L879.8 837.2 L881.4 837.0 L883.0 836.7 L884.6 837.2 L886.2 837.1 L887.8 837.0 L889.4 837.1 L891.0 837.3 L892.6 837.2 L894.2 837.2 L895.8 836.7 L897.5 836.9 L899.1 836.8 L900.7 837.2 L902.3 836.8 L903.9 837.2 L905.5 837.0 L907.1 836.9 L908.7 837.1" stroke="#f2495c" stroke-width="1.3" fill="none"/><path d="M912.7 836.8 L914.3 837.0 L915.9 837.0 L917.5 836.8 L919.1 837.2 L920.7 836.7 L922.3 836.9 L923.9 837.1 L925.6 836.8 L927.2 837.1 L928.8 836.7 L930.4 837.0 L932.0 837.1 L933.6 836.8 L935.2 837.0 L936.8 837.2 L938.4 836.9 L940.0 837.3 L941.6 836.8 L943.2 837.1 L944.8 836.9 L946.4 836.7 L948.0 836.9 L949.7 836.9 L951.3 837.1 L952.9 837.3 L954.5 837.3 L956.1 837.2 L957.7 836.9 L959.3 837.0 L960.9 837.0 L962.5 836.8 L964.1 837.2 L965.7 837.2 L967.3 836.9 L968.9 837.3 L970.5 837.3 L972.2 837.1 L973.8 837.2 L975.4 837.1 L977.0 837.2 L978.6 836.9 L980.2 836.9 L981.8 837.2 L983.4 836.9 L985.0 837.0 L986.6 837.2 L988.2 836.7 L989.8 837.2 L991.4 837.2 L993.0 837.2 L994.6 836.9 L996.3 836.8 L997.9 836.8 L999.5 837.1 L1001.1 837.1 L1002.7 837.3 L1004.3 836.9 L1005.9 837.0 L1007.5 837.1" stroke="#4b7a45" stroke-width="1.3" fill="none"/></svg>
<div class="t" id="t0" style="left:50px;top:11.6px;font-size:14px;color:#c6c6d2;transform:scaleX(1.0079);-webkit-text-stroke:0.25px currentColor;">Home</div>
<div class="t" id="t1" style="left:110.2px;top:11.6px;font-size:14px;color:#c6c6d2;transform:scaleX(1.0472);-webkit-text-stroke:0.25px currentColor;">Starred</div>
<div class="t" id="t2" style="left:179px;top:11.6px;font-size:14px;color:#9d9ea8;transform:scaleX(0.9919);-webkit-text-stroke:0.25px currentColor;">Panel Genérico Optimizar</div>
<div class="t" id="t3" style="left:523px;top:12px;font-size:12.5px;color:#ccccdc;transform:scaleX(1.0165);-webkit-text-stroke:0.25px currentColor;">Add</div>
<div class="t" id="t4" style="left:582px;top:12px;font-size:12.5px;color:#ffffff;transform:scaleX(0.9917);-webkit-text-stroke:0.25px currentColor;">Share</div>
<div class="t" id="t5" style="left:671px;top:11.1px;font-size:14.5px;color:#9d9ea8;transform:scaleX(0.9808);-webkit-text-stroke:0.25px currentColor;">This year so far</div>
<div class="t" id="t6" style="left:880px;top:11.1px;font-size:14.5px;color:#9d9ea8;transform:scaleX(1.0462);-webkit-text-stroke:0.25px currentColor;">30m</div>
<div class="t" id="t7" style="left:22.8px;top:48.8px;font-size:14px;color:#ccccdc;transform:scaleX(1.0248);-webkit-text-stroke:0.25px currentColor;">Visitas</div>
<div class="t" id="t8" style="left:22.8px;top:189.1px;font-size:14px;color:#ccccdc;transform:scaleX(1.0305);-webkit-text-stroke:0.25px currentColor;">Visitantes únicos</div>
<div class="t" id="t9" style="left:274px;top:48.7px;font-size:14px;color:#ccccdc;transform:scaleX(1.0069);-webkit-text-stroke:0.25px currentColor;">% nuevas visitas</div>
<div class="t" id="t10" style="left:523px;top:48.1px;font-size:14px;color:#ccccdc;transform:scaleX(1.0204);-webkit-text-stroke:0.25px currentColor;">Evolución de Visitas &amp; Visitantes únicos</div>
<div class="t" id="t11" style="left:70px;top:85.2px;font-size:49px;color:#73bf69;transform:scaleX(0.9691);-webkit-text-stroke:0.9px currentColor;">41595</div>
<div class="t" id="t12" style="left:65.2px;top:225.7px;font-size:46px;color:#73bf69;transform:scaleX(1.1032);-webkit-text-stroke:0.9px currentColor;">38885</div>
<div class="t" id="t13" style="left:113px;top:140.3px;font-size:18px;color:#f2495c;transform:scaleX(1.0637);-webkit-text-stroke:0.4px currentColor;">-70,5 %</div>
<div class="t" id="t14" style="left:118px;top:282.2px;font-size:17.5px;color:#f2495c;transform:scaleX(0.9584);-webkit-text-stroke:0.4px currentColor;">-71,1 %</div>
<div class="t" id="t15" style="left:333.2px;top:218.7px;font-size:40px;color:#f2495c;transform:scaleX(0.9644);">155</div>
<div class="t" id="t16" style="left:401px;top:218.7px;font-size:40px;color:#f2495c;transform:scaleX(0.8999);">%</div>
<div class="t" id="t17" style="left:529px;top:78.9px;font-size:12px;color:#b9b9c5;transform:scaleX(1.0293);">400</div>
<div class="t" id="t18" style="left:528px;top:124.6px;font-size:12px;color:#b9b9c5;transform:scaleX(1.0835);">300</div>
<div class="t" id="t19" style="left:528px;top:170.2px;font-size:12px;color:#b9b9c5;transform:scaleX(1.0835);">200</div>
<div class="t" id="t20" style="left:528px;top:215.7px;font-size:12px;color:#b9b9c5;transform:scaleX(1.0835);">100</div>
<div class="t" id="t21" style="left:540.2px;top:271.7px;font-size:12px;color:#b9b9c5;transform:scaleX(0.9379);">01/01</div>
<div class="t" id="t22" style="left:611.8px;top:271.7px;font-size:12px;color:#b9b9c5;transform:scaleX(0.9379);">02/01</div>
<div class="t" id="t23" style="left:679.2px;top:271.7px;font-size:12px;color:#b9b9c5;transform:scaleX(0.9379);">03/01</div>
<div class="t" id="t24" style="left:750.2px;top:271.7px;font-size:12px;color:#b9b9c5;transform:scaleX(0.9379);">04/01</div>
<div class="t" id="t25" style="left:819px;top:271.7px;font-size:12px;color:#b9b9c5;transform:scaleX(0.9379);">05/01</div>
<div class="t" id="t26" style="left:890.8px;top:271.7px;font-size:12px;color:#b9b9c5;transform:scaleX(0.9379);">06/01</div>
<div class="t" id="t27" style="left:959.2px;top:271.7px;font-size:12px;color:#b9b9c5;transform:scaleX(0.9379);">07/01</div>
<div class="t" id="t28" style="left:548.8px;top:290.1px;font-size:12px;color:#ccccdc;transform:scaleX(0.9675);">Visitas</div>
<div class="t" id="t29" style="left:614px;top:290.1px;font-size:12px;color:#ccccdc;transform:scaleX(1.0017);">Visitantes únicos</div>
<div class="t" id="t30" style="left:33.2px;top:326.9px;font-size:16px;color:#ccccdc;transform:scaleX(1.0232);-webkit-text-stroke:0.25px currentColor;">Comportamiento</div>
<div class="t" id="t31" style="left:22px;top:364.1px;font-size:14px;color:#ccccdc;transform:scaleX(1.0193);-webkit-text-stroke:0.25px currentColor;">Páginas vistas</div>
<div class="t" id="t32" style="left:483.2px;top:364.1px;font-size:14px;color:#ccccdc;transform:scaleX(1.0041);-webkit-text-stroke:0.25px currentColor;">Tasa de rebote</div>
<div class="t" id="t33" style="left:774.8px;top:364.1px;font-size:14px;color:#ccccdc;transform:scaleX(1.0092);-webkit-text-stroke:0.25px currentColor;">Tiempo medio</div>
<div class="t" id="t34" style="left:174.4px;top:408.6px;font-size:22.5px;color:#73bf69;transform:scaleX(1.1196);-webkit-text-stroke:0.4px currentColor;">84946</div>
<div class="t" id="t35" style="left:264px;top:414px;font-size:12.5px;color:#f2495c;transform:scaleX(0.9514);-webkit-text-stroke:0.25px currentColor;">-72,5 %</div>
<div class="t" id="t36" style="left:561px;top:409.4px;font-size:22.5px;color:#73bf69;transform:scaleX(0.9077);-webkit-text-stroke:0.4px currentColor;">141</div>
<div class="t" id="t37" style="left:593.8px;top:413.3px;font-size:17px;color:#73bf69;transform:scaleX(0.9282);-webkit-text-stroke:0.4px currentColor;">%</div>
<div class="t" id="t38" style="left:630px;top:413.8px;font-size:12.5px;color:#f2495c;transform:scaleX(0.9285);-webkit-text-stroke:0.25px currentColor;">-2,51 %</div>
<div class="t" id="t39" style="left:839px;top:408px;font-size:22.5px;color:#ec5a52;transform:scaleX(0.8967);-webkit-text-stroke:0.4px currentColor;">5.12</div>
<div class="t" id="t40" style="left:897px;top:414.2px;font-size:12.5px;color:#73bf69;transform:scaleX(1.0041);-webkit-text-stroke:0.25px currentColor;">9,34 %</div>
<div class="t" id="t41" style="left:33.2px;top:467.1px;font-size:16px;color:#ccccdc;transform:scaleX(1.0225);-webkit-text-stroke:0.25px currentColor;">Conversiones</div>
<div class="t" id="t42" style="left:146px;top:469.7px;font-size:11.5px;color:rgba(204,204,220,0.65);transform:scaleX(1.0772);font-style:italic">(3 panels)</div>
<div class="t" id="t43" style="left:34.2px;top:502.1px;font-size:16px;color:#ccccdc;transform:scaleX(1.0106);-webkit-text-stroke:0.25px currentColor;">Adquisición. Canales</div>
<div class="t" id="t44" style="left:198px;top:504.7px;font-size:11.5px;color:rgba(204,204,220,0.65);transform:scaleX(1.0597);font-style:italic">(1 panel)</div>
<div class="t" id="t45" style="left:33.2px;top:537.1px;font-size:16px;color:#ccccdc;transform:scaleX(1.0274);-webkit-text-stroke:0.25px currentColor;">Row title</div>
<div class="t" id="t46" style="left:22.8px;top:573.8px;font-size:14px;color:#ccccdc;transform:scaleX(1.0041);-webkit-text-stroke:0.25px currentColor;">Tasa de rebote</div>
<div class="t" id="t47" style="left:524.2px;top:573.8px;font-size:14px;color:#ccccdc;transform:scaleX(1.0248);-webkit-text-stroke:0.25px currentColor;">Visitas</div>
<div class="t" id="t48" style="left:22.8px;top:855.4px;font-size:14px;color:#ccccdc;transform:scaleX(1.0498);-webkit-text-stroke:0.25px currentColor;">Visitas</div>
<div class="t" id="t49" style="left:525px;top:855.4px;font-size:14px;color:#ccccdc;transform:scaleX(1.0525);-webkit-text-stroke:0.25px currentColor;">Tasa rebote</div>
<div class="t" id="t50" style="left:27px;top:605.2px;font-size:12px;color:#b9b9c5;transform:scaleX(1.0510);">0.85</div>
<div class="t" id="t51" style="left:34px;top:642.3px;font-size:12px;color:#b9b9c5;transform:scaleX(1.0563);">0.8</div>
<div class="t" id="t52" style="left:27px;top:679.6px;font-size:12px;color:#b9b9c5;transform:scaleX(1.0510);">0.75</div>
<div class="t" id="t53" style="left:34px;top:717.1px;font-size:12px;color:#b9b9c5;transform:scaleX(1.0563);">0.7</div>
<div class="t" id="t54" style="left:27px;top:753.9px;font-size:12px;color:#b9b9c5;transform:scaleX(1.0510);">0.65</div>
<div class="t" id="t55" style="left:41.6px;top:796.7px;font-size:12px;color:#b9b9c5;transform:scaleX(0.9379);">01/01</div>
<div class="t" id="t56" style="left:112.4px;top:796.7px;font-size:12px;color:#b9b9c5;transform:scaleX(0.9379);">02/01</div>
<div class="t" id="t57" style="left:178.8px;top:796.7px;font-size:12px;color:#b9b9c5;transform:scaleX(0.9379);">03/01</div>
<div class="t" id="t58" style="left:249px;top:796.7px;font-size:12px;color:#b9b9c5;transform:scaleX(0.9379);">04/01</div>
<div class="t" id="t59" style="left:319px;top:796.7px;font-size:12px;color:#b9b9c5;transform:scaleX(0.9379);">05/01</div>
<div class="t" id="t60" style="left:389px;top:796.7px;font-size:12px;color:#b9b9c5;transform:scaleX(0.9379);">06/01</div>
<div class="t" id="t61" style="left:458.8px;top:796.7px;font-size:12px;color:#b9b9c5;transform:scaleX(0.9379);">07/01</div>
<div class="t" id="t62" style="left:47.4px;top:816.1px;font-size:12px;color:#ccccdc;transform:scaleX(0.9951);">Tasa de rebote</div>
<div class="t" id="t63" style="left:528.2px;top:607.7px;font-size:5.5px;color:rgba(204,204,220,0.65);transform:scaleX(0.7573);">Visitas</div>
<div class="t" id="t64" style="left:528.8px;top:611.7px;font-size:15.5px;color:#f2495c;transform:scaleX(0.9930);-webkit-text-stroke:0.4px currentColor;">41595</div>
<div class="t" id="t65" style="left:542.2px;top:629.7px;font-size:13px;color:#f2495c;transform:scaleX(0.9285);-webkit-text-stroke:0.4px currentColor;">-70,5 %</div>
<div class="t" id="t66" style="left:610.6px;top:607.7px;font-size:5.5px;color:rgba(204,204,220,0.65);transform:scaleX(0.7599);">Visitantes únicos</div>
<div class="t" id="t67" style="left:610.6px;top:611.7px;font-size:15.5px;color:#f2495c;transform:scaleX(1.0580);-webkit-text-stroke:0.4px currentColor;">38885</div>
<div class="t" id="t68" style="left:623.8px;top:629.7px;font-size:13px;color:#f2495c;transform:scaleX(0.8033);-webkit-text-stroke:0.4px currentColor;">-71,1 %</div>
<div class="t" id="t69" style="left:693.3px;top:607.7px;font-size:5.5px;color:rgba(204,204,220,0.65);transform:scaleX(0.7378);">bounce_count</div>
<div class="t" id="t70" style="left:694px;top:611.7px;font-size:15.5px;color:#f2495c;transform:scaleX(0.9930);-webkit-text-stroke:0.4px currentColor;">30515</div>
<div class="t" id="t71" style="left:706.8px;top:629.7px;font-size:13px;color:#f2495c;transform:scaleX(0.8839);-webkit-text-stroke:0.4px currentColor;">-71,2 %</div>
<div class="t" id="t72" style="left:775px;top:607.7px;font-size:5.5px;color:rgba(204,204,220,0.65);transform:scaleX(0.7471);">Paginas vistas</div>
<div class="t" id="t73" style="left:775.6px;top:611.7px;font-size:15.5px;color:#f2495c;transform:scaleX(1.0812);-webkit-text-stroke:0.4px currentColor;">84946</div>
<div class="t" id="t74" style="left:789.2px;top:629.7px;font-size:13px;color:#f2495c;transform:scaleX(0.9375);-webkit-text-stroke:0.4px currentColor;">-72,5 %</div>
<div class="t" id="t75" style="left:857.7px;top:607.7px;font-size:5.5px;color:rgba(204,204,220,0.65);transform:scaleX(0.7461);">Conversiones</div>
<div class="t" id="t76" style="left:858.6px;top:611.7px;font-size:15.5px;color:#73bf69;transform:scaleX(0.9553);-webkit-text-stroke:0.4px currentColor;">0</div>
<div class="t" id="t77" style="left:940.7px;top:607.7px;font-size:5.5px;color:rgba(204,204,220,0.65);transform:scaleX(0.7410);">nb_visits_new</div>
<div class="t" id="t78" style="left:941px;top:611.7px;font-size:15.5px;color:#f2495c;transform:scaleX(0.9511);-webkit-text-stroke:0.4px currentColor;">33712</div>
<div class="t" id="t79" style="left:954px;top:629.7px;font-size:13px;color:#f2495c;transform:scaleX(0.9196);-webkit-text-stroke:0.4px currentColor;">-67,5 %</div>
<div class="t" id="t80" style="left:528.2px;top:730.5px;font-size:6px;color:rgba(204,204,220,0.65);transform:scaleX(0.8496);">nb_visits_returning</div>
<div class="t" id="t81" style="left:527px;top:737px;font-size:19px;color:#f2495c;transform:scaleX(1.1374);-webkit-text-stroke:0.4px currentColor;">7885</div>
<div class="t" id="t82" style="left:541.4px;top:757.9px;font-size:13.5px;color:#f2495c;transform:scaleX(0.9029);-webkit-text-stroke:0.4px currentColor;">-79,3 %</div>
<div class="t" id="t83" style="left:627px;top:730.5px;font-size:6px;color:rgba(204,204,220,0.65);transform:scaleX(0.8511);">PagePerformance_pageload_time</div>
<div class="t" id="t84" style="left:628.2px;top:737px;font-size:19px;color:#f2495c;transform:scaleX(1.1230);-webkit-text-stroke:0.4px currentColor;">406822</div>
<div class="t" id="t85" style="left:640px;top:757.9px;font-size:13.5px;color:#f2495c;transform:scaleX(0.9016);-webkit-text-stroke:0.4px currentColor;">-69 %</div>
<div class="t" id="t86" style="left:726.5px;top:730.5px;font-size:6px;color:rgba(204,204,220,0.65);transform:scaleX(0.8488);">Tasa de rebote</div>
<div class="t" id="t87" style="left:725px;top:737px;font-size:19px;color:#f2495c;transform:scaleX(0.9312);-webkit-text-stroke:0.4px currentColor;">141</div>
<div class="t" id="t88" style="left:739.6px;top:757.9px;font-size:13.5px;color:#f2495c;transform:scaleX(0.8469);-webkit-text-stroke:0.4px currentColor;">-2,51 %</div>
<div class="t" id="t89" style="left:825.2px;top:730.5px;font-size:6px;color:rgba(204,204,220,0.65);transform:scaleX(0.8638);">% visitas nuevas</div>
<div class="t" id="t90" style="left:824px;top:737px;font-size:19px;color:#f2495c;transform:scaleX(1.0121);-webkit-text-stroke:0.4px currentColor;">155</div>
<div class="t" id="t91" style="left:837px;top:757.9px;font-size:13.5px;color:#73bf69;transform:scaleX(0.8858);-webkit-text-stroke:0.4px currentColor;">10 %</div>
<div class="t" id="t92" style="left:924px;top:730.5px;font-size:6px;color:rgba(204,204,220,0.65);transform:scaleX(0.8626);">Tasa conversión</div>
<div class="t" id="t93" style="left:924.2px;top:737px;font-size:19px;color:#73bf69;transform:scaleX(1.1491);-webkit-text-stroke:0.4px currentColor;">0</div>
</body></html>
